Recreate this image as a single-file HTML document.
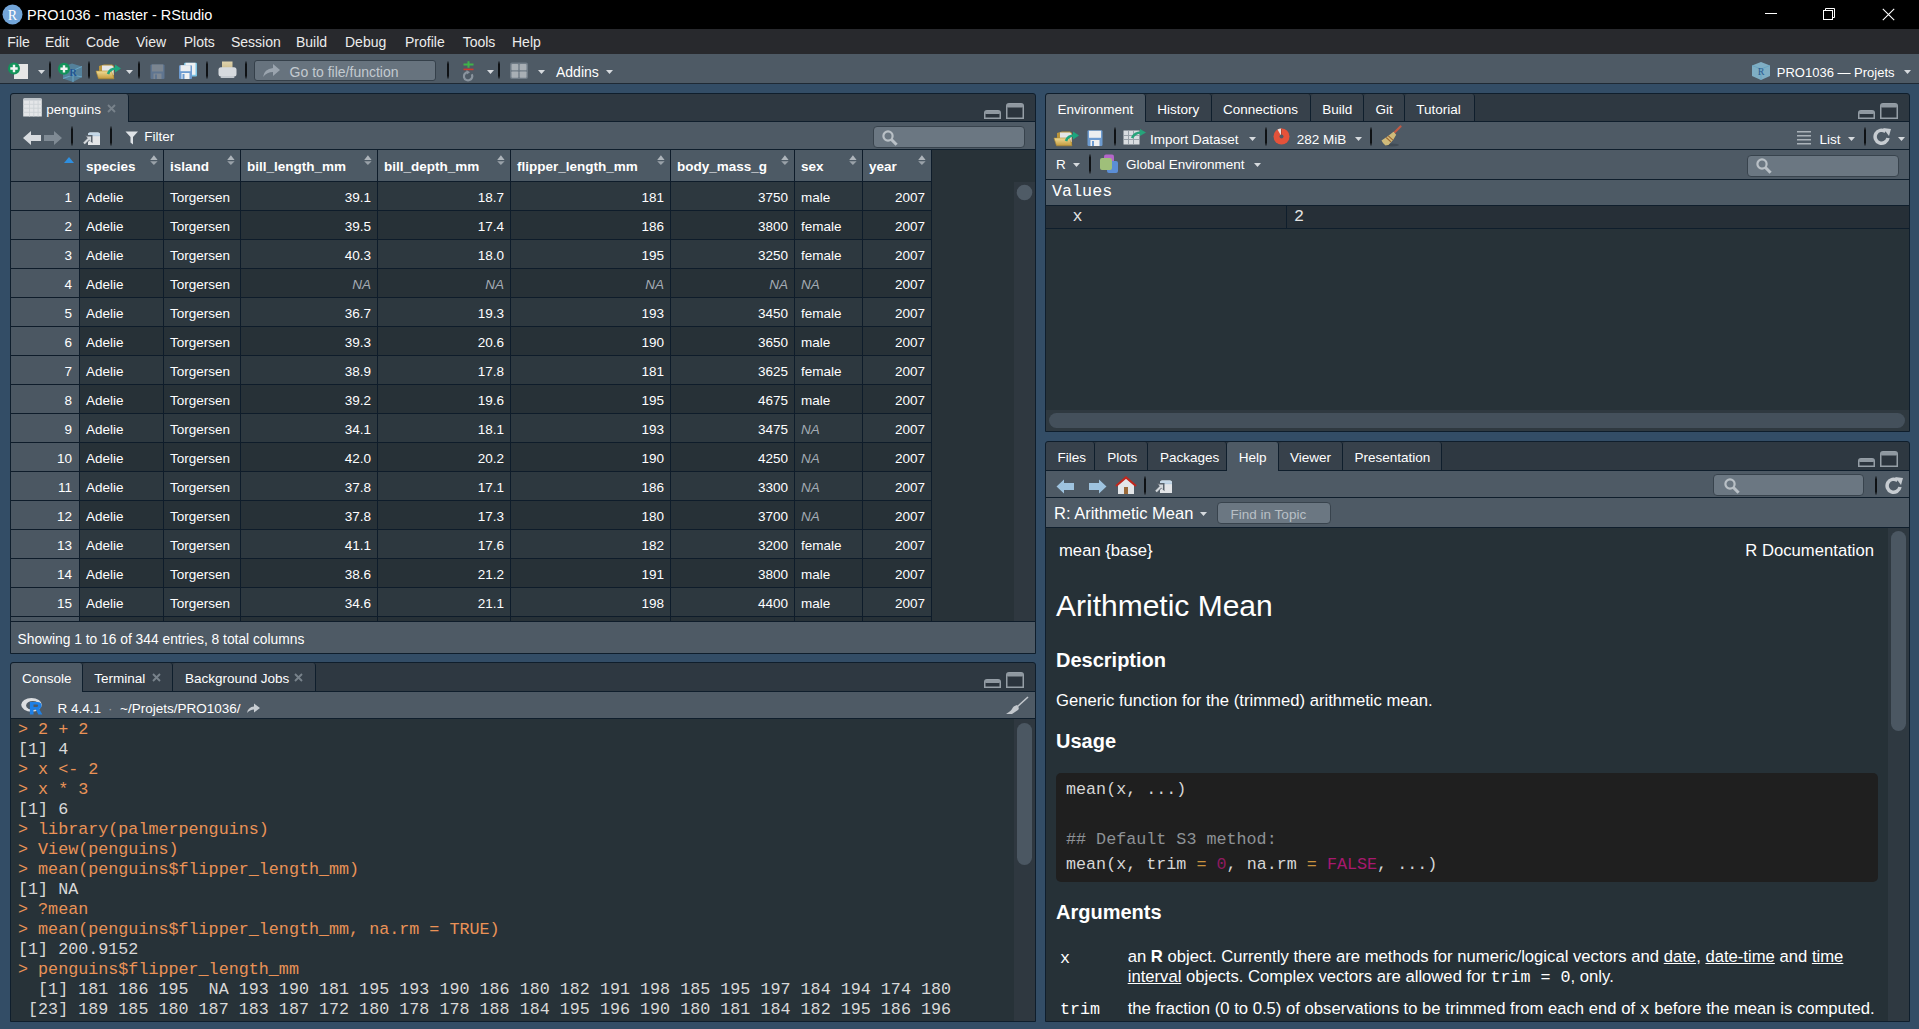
<!DOCTYPE html><html><head><meta charset="utf-8"><style>
html,body{margin:0;padding:0;background:#334d66;}
#root{position:relative;width:1919px;height:1029px;overflow:hidden;background:#334d66;font-family:"Liberation Sans",sans-serif;}
#root div,#root svg{position:absolute;}
</style></head><body><div id="root">
<div style="left:0px;top:0px;width:1919px;height:29px;background:#000000;"></div>
<svg style="left:1.5px;top:3.6px;" width="21" height="21" viewBox="0 0 21 21"><circle cx="10.5" cy="10.5" r="10" fill="#72a5d9"/><text x="10.5" y="15.5" font-family="Liberation Serif" font-size="14" fill="#fff" text-anchor="middle">R</text></svg>
<div style="left:27px;top:6.48px;line-height:19px;font-size:14.5px;color:#ffffff;font-weight:normal;font-family:'Liberation Sans', sans-serif;white-space:pre;">PRO1036 - master - RStudio</div>
<div style="left:1765px;top:13px;width:12px;height:1px;background:#ffffff;"></div>
<svg style="left:1822px;top:7px;" width="15" height="15" viewBox="0 0 15 15"><path d="M3.5 3.5 V1.5 H12.5 V10.5 H10.5" fill="none" stroke="#fff" stroke-width="1"/><rect x="1.5" y="3.5" width="9" height="9" fill="none" stroke="#fff" stroke-width="1"/></svg>
<svg style="left:1881.5px;top:7.5px;" width="13" height="13" viewBox="0 0 13 13"><path d="M0.8 0.8 L12.2 12.2 M12.2 0.8 L0.8 12.2" stroke="#fff" stroke-width="1.1"/></svg>
<div style="left:0px;top:29px;width:1919px;height:25px;background:#28292d;"></div>
<div style="left:7.3px;top:33.15px;line-height:18px;font-size:14px;color:#ececec;font-weight:normal;font-family:'Liberation Sans', sans-serif;white-space:pre;">File</div>
<div style="left:45px;top:33.15px;line-height:18px;font-size:14px;color:#ececec;font-weight:normal;font-family:'Liberation Sans', sans-serif;white-space:pre;">Edit</div>
<div style="left:86px;top:33.15px;line-height:18px;font-size:14px;color:#ececec;font-weight:normal;font-family:'Liberation Sans', sans-serif;white-space:pre;">Code</div>
<div style="left:136px;top:33.15px;line-height:18px;font-size:14px;color:#ececec;font-weight:normal;font-family:'Liberation Sans', sans-serif;white-space:pre;">View</div>
<div style="left:183.7px;top:33.15px;line-height:18px;font-size:14px;color:#ececec;font-weight:normal;font-family:'Liberation Sans', sans-serif;white-space:pre;">Plots</div>
<div style="left:231px;top:33.15px;line-height:18px;font-size:14px;color:#ececec;font-weight:normal;font-family:'Liberation Sans', sans-serif;white-space:pre;">Session</div>
<div style="left:296px;top:33.15px;line-height:18px;font-size:14px;color:#ececec;font-weight:normal;font-family:'Liberation Sans', sans-serif;white-space:pre;">Build</div>
<div style="left:345px;top:33.15px;line-height:18px;font-size:14px;color:#ececec;font-weight:normal;font-family:'Liberation Sans', sans-serif;white-space:pre;">Debug</div>
<div style="left:405px;top:33.15px;line-height:18px;font-size:14px;color:#ececec;font-weight:normal;font-family:'Liberation Sans', sans-serif;white-space:pre;">Profile</div>
<div style="left:462.7px;top:33.15px;line-height:18px;font-size:14px;color:#ececec;font-weight:normal;font-family:'Liberation Sans', sans-serif;white-space:pre;">Tools</div>
<div style="left:512px;top:33.15px;line-height:18px;font-size:14px;color:#ececec;font-weight:normal;font-family:'Liberation Sans', sans-serif;white-space:pre;">Help</div>
<div style="left:0px;top:54px;width:1919px;height:29px;background:#4e5a65;"></div>
<div style="left:0px;top:83px;width:1919px;height:1px;background:#1f2a35;"></div>
<svg style="left:7px;top:62px;" width="23" height="18" viewBox="0 0 23 18"><rect x="7" y="2" width="14" height="15" fill="#e6e6e6"/><circle cx="7" cy="6.5" r="6" fill="#13935a"/><path d="M7 2.8 V10.2 M3.3 6.5 H10.7" stroke="#f4f4f4" stroke-width="2.4"/></svg>
<svg style="left:38px;top:70px;" width="7" height="4" viewBox="0 0 7 4"><path d="M0 0 L7 0 L3.5 4 Z" fill="#d6dade"/></svg>
<div style="left:49px;top:61px;width:2px;height:18px;background:linear-gradient(rgba(14,17,20,0.25),#0e1114 18%,#0e1114 82%,rgba(14,17,20,0.25));border-radius:1px"></div>
<svg style="left:57px;top:62px;" width="26" height="21" viewBox="0 0 26 21"><path d="M15 1.5 L25 4.5 L25 15 L16 20 L6 16.5 L6 5 Z" fill="#5aa2c8" opacity="0.55"/><path d="M6 5 L16 8.5 L25 4.5 M16 8.5 V20 M6 16.5 L16 13 L25 15" stroke="#77bde0" stroke-width="0.8" fill="none" opacity="0.8"/><text x="16" y="14" font-family="Liberation Serif" font-size="10" font-weight="bold" fill="#1f5594" text-anchor="middle">R</text><circle cx="7" cy="6.8" r="6" fill="#13935a"/><path d="M7 3.2 V10.4 M3.4 6.8 H10.6" stroke="#f4f4f4" stroke-width="2.4"/></svg>
<div style="left:88px;top:61px;width:2px;height:18px;background:linear-gradient(rgba(14,17,20,0.25),#0e1114 18%,#0e1114 82%,rgba(14,17,20,0.25));border-radius:1px"></div>
<svg style="left:95px;top:62px;" width="27" height="18" viewBox="0 0 27 18"><defs><linearGradient id="fg" x1="0" y1="0" x2="0" y2="1"><stop offset="0" stop-color="#f0dc98"/><stop offset="1" stop-color="#c39a3c"/></linearGradient></defs><path d="M4 4 L9 2.5 H17 L19 4 V16 H4 Z" fill="#b8943c"/><path d="M7 3.5 H17 L18.5 5 V13 H7 Z" fill="#e4e6e8"/><path d="M1 9 H16.5 L19 16.8 H3.5 Z" fill="url(#fg)" stroke="#b08a30" stroke-width="0.6"/><path d="M13 12 Q15 6.5 21 6.5" stroke="#1ea67e" stroke-width="2.6" fill="none"/><path d="M20 2.5 L26 6.5 L20 10.5 Z" fill="#1ea67e"/></svg>
<svg style="left:126px;top:70px;" width="7" height="4" viewBox="0 0 7 4"><path d="M0 0 L7 0 L3.5 4 Z" fill="#d6dade"/></svg>
<div style="left:138px;top:61px;width:2px;height:18px;background:linear-gradient(rgba(14,17,20,0.25),#0e1114 18%,#0e1114 82%,rgba(14,17,20,0.25));border-radius:1px"></div>
<svg style="left:150px;top:64px;" width="16" height="16" viewBox="0 0 16 16"><rect x="0.5" y="0.5" width="14" height="14.5" rx="1" fill="#5f7590"/><rect x="2" y="0.5" width="11" height="7" fill="#7b8590"/><rect x="3.5" y="9.5" width="8" height="5.5" fill="#7e8893"/><rect x="5" y="10.5" width="2" height="4.5" fill="#5f7590"/></svg>
<svg style="left:178px;top:62px;" width="21" height="18" viewBox="0 0 21 18"><rect x="6" y="0.8" width="13" height="13.8" rx="1" fill="#7cc4e4"/><rect x="7.5" y="0.8" width="10" height="12" fill="#eef1f3"/><rect x="1" y="3.2" width="13" height="13.8" rx="1" fill="#6d9bd0"/><rect x="2.5" y="3.2" width="10" height="6" fill="#eceef0"/><rect x="3.5" y="11" width="8" height="6" fill="#f2f2f2"/><rect x="4.5" y="12" width="2" height="5" fill="#6d9bd0"/></svg>
<div style="left:206px;top:61px;width:2px;height:18px;background:linear-gradient(rgba(14,17,20,0.25),#0e1114 18%,#0e1114 82%,rgba(14,17,20,0.25));border-radius:1px"></div>
<svg style="left:217px;top:61px;" width="21" height="18" viewBox="0 0 21 18"><defs><linearGradient id="pg" x1="0" y1="0" x2="0" y2="1"><stop offset="0" stop-color="#e0d4ae"/><stop offset="1" stop-color="#c8b88a"/></linearGradient></defs><rect x="5" y="0.5" width="10.5" height="8.5" fill="url(#pg)"/><rect x="1.5" y="6.2" width="18" height="9.2" rx="2.5" fill="#d6dade"/><rect x="3.5" y="15" width="14" height="2" rx="1" fill="#c4cad0"/></svg>
<div style="left:245px;top:61px;width:2px;height:18px;background:linear-gradient(rgba(14,17,20,0.25),#0e1114 18%,#0e1114 82%,rgba(14,17,20,0.25));border-radius:1px"></div>
<div style="left:254px;top:60px;width:180px;height:19px;background:#67737e;border:1px solid #35404a;border-radius:3px"></div>
<svg style="left:262px;top:63px;" width="19" height="15" viewBox="0 0 19 15"><path d="M1 14 Q2 6 11 5 V1 L18 7 L11 13 V9 Q5 9 1 14 Z" fill="#9aa4ae"/></svg>
<div style="left:289.6px;top:63.15px;line-height:18px;font-size:14px;color:#c3cad0;font-weight:normal;font-family:'Liberation Sans', sans-serif;white-space:pre;">Go to file/function</div>
<div style="left:447px;top:61px;width:2px;height:18px;background:linear-gradient(rgba(14,17,20,0.25),#0e1114 18%,#0e1114 82%,rgba(14,17,20,0.25));border-radius:1px"></div>
<svg style="left:461px;top:60px;" width="15" height="22" viewBox="0 0 15 22"><path d="M7.5 1.2 V7.8 M2.5 4.5 H12.5" stroke="#3fb34a" stroke-width="2"/><rect x="2.5" y="8.6" width="10" height="1.6" fill="#cf3a30"/><path d="M10.8 14.2 A4.2 4.2 0 1 1 6.6 12" stroke="#8a949e" stroke-width="2.2" fill="none"/><path d="M5.5 10 L9 12.2 L5.8 14.6 Z" fill="#8a949e"/></svg>
<svg style="left:486.6px;top:70px;" width="7" height="4" viewBox="0 0 7 4"><path d="M0 0 L7 0 L3.5 4 Z" fill="#d6dade"/></svg>
<div style="left:498px;top:61px;width:2px;height:18px;background:linear-gradient(rgba(14,17,20,0.25),#0e1114 18%,#0e1114 82%,rgba(14,17,20,0.25));border-radius:1px"></div>
<svg style="left:509px;top:62px;" width="20" height="18" viewBox="0 0 20 18"><rect x="1" y="0.5" width="18" height="16.5" rx="2" fill="#6f7b86"/><rect x="2.5" y="2" width="6.8" height="6.2" rx="0.8" fill="#a8afb5"/><rect x="10.7" y="2" width="6.8" height="6.2" rx="0.8" fill="#a8afb5"/><rect x="2.5" y="9.5" width="6.8" height="6.2" rx="0.8" fill="#a8afb5"/><rect x="10.7" y="9.5" width="6.8" height="6.2" rx="0.8" fill="#a8afb5"/></svg>
<svg style="left:538px;top:70px;" width="7" height="4" viewBox="0 0 7 4"><path d="M0 0 L7 0 L3.5 4 Z" fill="#d6dade"/></svg>
<div style="left:556px;top:63.15px;line-height:18px;font-size:14px;color:#ffffff;font-weight:normal;font-family:'Liberation Sans', sans-serif;white-space:pre;">Addins</div>
<svg style="left:606.4px;top:70px;" width="7" height="4" viewBox="0 0 7 4"><path d="M0 0 L7 0 L3.5 4 Z" fill="#d6dade"/></svg>
<svg style="left:1751px;top:61px;" width="20" height="20" viewBox="0 0 20 20"><path d="M10 1 L19 4.5 L19 15 L10 19 L1 15 L1 4.5 Z" fill="#8cc3dc" opacity="0.8"/><path d="M1 4.5 L10 8 L19 4.5 M10 8 V19" stroke="#5fa0c0" stroke-width="0.7" fill="none"/><text x="10" y="13.5" font-family="Liberation Serif" font-size="10" fill="#2a5c92" text-anchor="middle">R</text></svg>
<div style="left:1776.8px;top:64.00px;line-height:17px;font-size:13px;color:#ffffff;font-weight:normal;font-family:'Liberation Sans', sans-serif;white-space:pre;">PRO1036 — Projets</div>
<svg style="left:1904px;top:70px;" width="7" height="4" viewBox="0 0 7 4"><path d="M0 0 L7 0 L3.5 4 Z" fill="#d6dade"/></svg>
<div style="left:10px;top:93px;width:1024px;height:559px;border:1px solid #0f1e2c;border-radius:3px 3px 0 0;background:#2e3841;overflow:hidden"></div>
<div style="left:11px;top:121px;width:1024px;height:1px;background:#0f1e2c;"></div>
<div style="left:11px;top:94px;width:117px;height:28px;background:#4e5a65;border-right:1px solid #0f1e2c;border-radius:3px 3px 0 0"></div>
<div style="left:46.3px;top:101.32px;line-height:18px;font-size:13.5px;color:#ffffff;font-weight:normal;font-family:'Liberation Sans', sans-serif;white-space:pre;">penguins</div>
<svg style="left:107px;top:103.5px;" width="9" height="9" viewBox="0 0 9 9"><path d="M1 1 L8 8 M8 1 L1 8" stroke="#78828b" stroke-width="1.9"/></svg>
<svg style="left:22.5px;top:97.5px;" width="19" height="19" viewBox="0 0 19 19"><path d="M0.2 18.5 V2 Q0.2 0.2 2 0.2 H17 Q18.8 0.2 18.8 2 V18.5 Z" fill="#e4e6e8"/><rect x="0.2" y="0.2" width="18.6" height="2.3" rx="1.2" fill="#bfc6cc"/><path d="M6.5 2.5 V18.5" stroke="#cdd2d6" stroke-width="0.9"/><path d="M10.8 2.5 V18.5" stroke="#cdd2d6" stroke-width="0.9"/><path d="M15.1 2.5 V18.5" stroke="#cdd2d6" stroke-width="0.9"/><path d="M0.2 6.3 H18.8" stroke="#cdd2d6" stroke-width="0.9"/><path d="M0.2 10.2 H18.8" stroke="#cdd2d6" stroke-width="0.9"/><path d="M0.2 14.3 H18.8" stroke="#cdd2d6" stroke-width="0.9"/></svg>
<svg style="left:984px;top:110px;" width="17" height="9" viewBox="0 0 17 9"><path d="M0.75 8.25 V3 Q0.75 0.75 3 0.75 H14 Q16.25 0.75 16.25 3 V8.25 Z" fill="#2b343d" stroke="#959ea6" stroke-width="1.5"/><rect x="1" y="1" width="15" height="3" rx="1" fill="#8f98a0"/></svg>
<svg style="left:1006px;top:103px;" width="18" height="16" viewBox="0 0 18 16"><path d="M0.75 15.25 V3 Q0.75 0.75 3 0.75 H15 Q17.25 0.75 17.25 3 V15.25 Z" fill="#2b343d" stroke="#959ea6" stroke-width="1.5"/><rect x="1" y="1" width="16" height="3.5" rx="1" fill="#8f98a0"/></svg>
<div style="left:11px;top:122px;width:1024px;height:27px;background:#4e5a65;"></div>
<div style="left:11px;top:149px;width:1024px;height:1px;background:#0f1e2c;"></div>
<svg style="left:22px;top:130px;" width="20" height="16" viewBox="0 0 20 16"><path d="M1 8 L9 1 V5 H19 V11 H9 V15 Z" fill="#d7dbdf"/></svg>
<svg style="left:43px;top:130px;" width="20" height="16" viewBox="0 0 20 16"><path d="M19 8 L11 1 V5 H1 V11 H11 V15 Z" fill="#7f8a94"/></svg>
<div style="left:70.5px;top:126px;width:2px;height:20px;background:linear-gradient(rgba(14,17,20,0.25),#0e1114 18%,#0e1114 82%,rgba(14,17,20,0.25));border-radius:1px"></div>
<svg style="left:81.5px;top:131.5px;" width="20" height="15" viewBox="0 0 20 15"><path d="M6 13 V2.5 Q6 0.5 8 0.5 H16 Q18 0.5 18 2.5 V13 Z" fill="#e3e5e8"/><path d="M6 3.2 V2.5 Q6 0.5 8 0.5 H16 Q18 0.5 18 2.5 V3.2 Z" fill="#c5d8e8"/><rect x="6" y="3" width="12" height="1.2" fill="#b8cde0"/><path d="M4 3.8 H9.8 V9.6 Z" fill="#59636d" stroke="#59636d" stroke-width="1.4"/><path d="M2 11.5 L7 6.5" stroke="#59636d" stroke-width="3.6"/><path d="M2 11.5 L7 6.5" stroke="#d4d8dc" stroke-width="2.2"/><path d="M4.2 4.6 H9 V9.4 Z" fill="#d4d8dc"/></svg>
<div style="left:109.5px;top:126px;width:2px;height:20px;background:linear-gradient(rgba(14,17,20,0.25),#0e1114 18%,#0e1114 82%,rgba(14,17,20,0.25));border-radius:1px"></div>
<svg style="left:125px;top:131px;" width="14" height="14" viewBox="0 0 14 14"><path d="M0.5 0.5 H13 L8 6 V13.5 L5.5 11.5 V6 Z" fill="#dfe3e7"/></svg>
<div style="left:144.3px;top:128.32px;line-height:18px;font-size:13.5px;color:#ffffff;font-weight:normal;font-family:'Liberation Sans', sans-serif;white-space:pre;">Filter</div>
<div style="left:873px;top:126px;width:150px;height:20px;background:#6b7782;border:1px solid #38434d;border-radius:4px"></div>
<svg style="left:881px;top:128.5px;" width="18" height="18" viewBox="0 0 18 18"><circle cx="7" cy="7" r="4.6" fill="none" stroke="#b9c0c6" stroke-width="2.2"/><path d="M10.2 10.2 L15.6 15.8" stroke="#b9c0c6" stroke-width="3"/></svg>
<div style="left:11px;top:150px;width:1024px;height:471px;background:#283238;"></div>
<div style="left:11px;top:150px;width:68px;height:31px;background:#4b5762;"></div>
<div style="left:79px;top:150px;width:1px;height:31px;background:#0e1c2a;"></div>
<div style="left:80px;top:150px;width:83px;height:31px;background:#4d5a65;"></div>
<div style="left:163px;top:150px;width:1px;height:31px;background:#0e1c2a;"></div>
<div style="left:86px;top:158.32px;line-height:18px;font-size:13.5px;color:#ffffff;font-weight:bold;font-family:'Liberation Sans', sans-serif;white-space:pre;">species</div>
<svg style="left:149.5px;top:155px;" width="8" height="10" viewBox="0 0 8 10"><path d="M0.2 5 L3.9 0.2 L7.6 5 Z" fill="#aeb5bb"/><path d="M0.2 6.2 L3.9 10 L7.6 6.2 Z" fill="#9aa2a9"/></svg>
<div style="left:164px;top:150px;width:76px;height:31px;background:#4d5a65;"></div>
<div style="left:240px;top:150px;width:1px;height:31px;background:#0e1c2a;"></div>
<div style="left:170px;top:158.32px;line-height:18px;font-size:13.5px;color:#ffffff;font-weight:bold;font-family:'Liberation Sans', sans-serif;white-space:pre;">island</div>
<svg style="left:226.5px;top:155px;" width="8" height="10" viewBox="0 0 8 10"><path d="M0.2 5 L3.9 0.2 L7.6 5 Z" fill="#aeb5bb"/><path d="M0.2 6.2 L3.9 10 L7.6 6.2 Z" fill="#9aa2a9"/></svg>
<div style="left:241px;top:150px;width:136px;height:31px;background:#4d5a65;"></div>
<div style="left:377px;top:150px;width:1px;height:31px;background:#0e1c2a;"></div>
<div style="left:247px;top:158.32px;line-height:18px;font-size:13.5px;color:#ffffff;font-weight:bold;font-family:'Liberation Sans', sans-serif;white-space:pre;">bill_length_mm</div>
<svg style="left:363.5px;top:155px;" width="8" height="10" viewBox="0 0 8 10"><path d="M0.2 5 L3.9 0.2 L7.6 5 Z" fill="#aeb5bb"/><path d="M0.2 6.2 L3.9 10 L7.6 6.2 Z" fill="#9aa2a9"/></svg>
<div style="left:378px;top:150px;width:132px;height:31px;background:#4d5a65;"></div>
<div style="left:510px;top:150px;width:1px;height:31px;background:#0e1c2a;"></div>
<div style="left:384px;top:158.32px;line-height:18px;font-size:13.5px;color:#ffffff;font-weight:bold;font-family:'Liberation Sans', sans-serif;white-space:pre;">bill_depth_mm</div>
<svg style="left:496.5px;top:155px;" width="8" height="10" viewBox="0 0 8 10"><path d="M0.2 5 L3.9 0.2 L7.6 5 Z" fill="#aeb5bb"/><path d="M0.2 6.2 L3.9 10 L7.6 6.2 Z" fill="#9aa2a9"/></svg>
<div style="left:511px;top:150px;width:159px;height:31px;background:#4d5a65;"></div>
<div style="left:670px;top:150px;width:1px;height:31px;background:#0e1c2a;"></div>
<div style="left:517px;top:158.32px;line-height:18px;font-size:13.5px;color:#ffffff;font-weight:bold;font-family:'Liberation Sans', sans-serif;white-space:pre;">flipper_length_mm</div>
<svg style="left:656.5px;top:155px;" width="8" height="10" viewBox="0 0 8 10"><path d="M0.2 5 L3.9 0.2 L7.6 5 Z" fill="#aeb5bb"/><path d="M0.2 6.2 L3.9 10 L7.6 6.2 Z" fill="#9aa2a9"/></svg>
<div style="left:671px;top:150px;width:123px;height:31px;background:#4d5a65;"></div>
<div style="left:794px;top:150px;width:1px;height:31px;background:#0e1c2a;"></div>
<div style="left:677px;top:158.32px;line-height:18px;font-size:13.5px;color:#ffffff;font-weight:bold;font-family:'Liberation Sans', sans-serif;white-space:pre;">body_mass_g</div>
<svg style="left:780.5px;top:155px;" width="8" height="10" viewBox="0 0 8 10"><path d="M0.2 5 L3.9 0.2 L7.6 5 Z" fill="#aeb5bb"/><path d="M0.2 6.2 L3.9 10 L7.6 6.2 Z" fill="#9aa2a9"/></svg>
<div style="left:795px;top:150px;width:67px;height:31px;background:#4d5a65;"></div>
<div style="left:862px;top:150px;width:1px;height:31px;background:#0e1c2a;"></div>
<div style="left:801px;top:158.32px;line-height:18px;font-size:13.5px;color:#ffffff;font-weight:bold;font-family:'Liberation Sans', sans-serif;white-space:pre;">sex</div>
<svg style="left:848.5px;top:155px;" width="8" height="10" viewBox="0 0 8 10"><path d="M0.2 5 L3.9 0.2 L7.6 5 Z" fill="#aeb5bb"/><path d="M0.2 6.2 L3.9 10 L7.6 6.2 Z" fill="#9aa2a9"/></svg>
<div style="left:863px;top:150px;width:68px;height:31px;background:#4d5a65;"></div>
<div style="left:931px;top:150px;width:1px;height:31px;background:#0e1c2a;"></div>
<div style="left:869px;top:158.32px;line-height:18px;font-size:13.5px;color:#ffffff;font-weight:bold;font-family:'Liberation Sans', sans-serif;white-space:pre;">year</div>
<svg style="left:917.5px;top:155px;" width="8" height="10" viewBox="0 0 8 10"><path d="M0.2 5 L3.9 0.2 L7.6 5 Z" fill="#aeb5bb"/><path d="M0.2 6.2 L3.9 10 L7.6 6.2 Z" fill="#9aa2a9"/></svg>
<svg style="left:64px;top:157px;" width="10" height="6" viewBox="0 0 10 6"><path d="M0 6 L5 0 L10 6 Z" fill="#2e8fe0"/></svg>
<div style="left:11px;top:181px;width:921px;height:1px;background:#0e1c2a;"></div>
<div style="left:11px;top:182px;width:68px;height:28px;background:#4b5762;"></div>
<div style="left:80px;top:182px;width:852px;height:28px;background:#2d383f;"></div>
<div style="left:79px;top:182px;width:1px;height:28px;background:#0e1c2a;"></div>
<div style="left:163px;top:182px;width:1px;height:28px;background:#0e1c2a;"></div>
<div style="left:240px;top:182px;width:1px;height:28px;background:#0e1c2a;"></div>
<div style="left:377px;top:182px;width:1px;height:28px;background:#0e1c2a;"></div>
<div style="left:510px;top:182px;width:1px;height:28px;background:#0e1c2a;"></div>
<div style="left:670px;top:182px;width:1px;height:28px;background:#0e1c2a;"></div>
<div style="left:794px;top:182px;width:1px;height:28px;background:#0e1c2a;"></div>
<div style="left:862px;top:182px;width:1px;height:28px;background:#0e1c2a;"></div>
<div style="left:931px;top:182px;width:1px;height:28px;background:#0e1c2a;"></div>
<div style="left:11px;top:210px;width:921px;height:1px;background:#0e1c2a;"></div>
<div style="right:1847px;top:189.32px;line-height:18px;font-size:13.5px;color:#ffffff;font-weight:normal;font-family:'Liberation Sans', sans-serif;white-space:pre;">1</div>
<div style="left:86px;top:189.32px;line-height:18px;font-size:13.5px;color:#ffffff;font-weight:normal;font-family:'Liberation Sans', sans-serif;white-space:pre;">Adelie</div>
<div style="left:170px;top:189.32px;line-height:18px;font-size:13.5px;color:#ffffff;font-weight:normal;font-family:'Liberation Sans', sans-serif;white-space:pre;">Torgersen</div>
<div style="right:1548px;top:189.32px;line-height:18px;font-size:13.5px;color:#ffffff;font-weight:normal;font-family:'Liberation Sans', sans-serif;white-space:pre;">39.1</div>
<div style="right:1415px;top:189.32px;line-height:18px;font-size:13.5px;color:#ffffff;font-weight:normal;font-family:'Liberation Sans', sans-serif;white-space:pre;">18.7</div>
<div style="right:1255px;top:189.32px;line-height:18px;font-size:13.5px;color:#ffffff;font-weight:normal;font-family:'Liberation Sans', sans-serif;white-space:pre;">181</div>
<div style="right:1131px;top:189.32px;line-height:18px;font-size:13.5px;color:#ffffff;font-weight:normal;font-family:'Liberation Sans', sans-serif;white-space:pre;">3750</div>
<div style="left:801px;top:189.32px;line-height:18px;font-size:13.5px;color:#ffffff;font-weight:normal;font-family:'Liberation Sans', sans-serif;white-space:pre;">male</div>
<div style="right:994px;top:189.32px;line-height:18px;font-size:13.5px;color:#ffffff;font-weight:normal;font-family:'Liberation Sans', sans-serif;white-space:pre;">2007</div>
<div style="left:11px;top:211px;width:68px;height:28px;background:#4b5762;"></div>
<div style="left:80px;top:211px;width:852px;height:28px;background:#273137;"></div>
<div style="left:79px;top:211px;width:1px;height:28px;background:#0e1c2a;"></div>
<div style="left:163px;top:211px;width:1px;height:28px;background:#0e1c2a;"></div>
<div style="left:240px;top:211px;width:1px;height:28px;background:#0e1c2a;"></div>
<div style="left:377px;top:211px;width:1px;height:28px;background:#0e1c2a;"></div>
<div style="left:510px;top:211px;width:1px;height:28px;background:#0e1c2a;"></div>
<div style="left:670px;top:211px;width:1px;height:28px;background:#0e1c2a;"></div>
<div style="left:794px;top:211px;width:1px;height:28px;background:#0e1c2a;"></div>
<div style="left:862px;top:211px;width:1px;height:28px;background:#0e1c2a;"></div>
<div style="left:931px;top:211px;width:1px;height:28px;background:#0e1c2a;"></div>
<div style="left:11px;top:239px;width:921px;height:1px;background:#0e1c2a;"></div>
<div style="right:1847px;top:218.32px;line-height:18px;font-size:13.5px;color:#ffffff;font-weight:normal;font-family:'Liberation Sans', sans-serif;white-space:pre;">2</div>
<div style="left:86px;top:218.32px;line-height:18px;font-size:13.5px;color:#ffffff;font-weight:normal;font-family:'Liberation Sans', sans-serif;white-space:pre;">Adelie</div>
<div style="left:170px;top:218.32px;line-height:18px;font-size:13.5px;color:#ffffff;font-weight:normal;font-family:'Liberation Sans', sans-serif;white-space:pre;">Torgersen</div>
<div style="right:1548px;top:218.32px;line-height:18px;font-size:13.5px;color:#ffffff;font-weight:normal;font-family:'Liberation Sans', sans-serif;white-space:pre;">39.5</div>
<div style="right:1415px;top:218.32px;line-height:18px;font-size:13.5px;color:#ffffff;font-weight:normal;font-family:'Liberation Sans', sans-serif;white-space:pre;">17.4</div>
<div style="right:1255px;top:218.32px;line-height:18px;font-size:13.5px;color:#ffffff;font-weight:normal;font-family:'Liberation Sans', sans-serif;white-space:pre;">186</div>
<div style="right:1131px;top:218.32px;line-height:18px;font-size:13.5px;color:#ffffff;font-weight:normal;font-family:'Liberation Sans', sans-serif;white-space:pre;">3800</div>
<div style="left:801px;top:218.32px;line-height:18px;font-size:13.5px;color:#ffffff;font-weight:normal;font-family:'Liberation Sans', sans-serif;white-space:pre;">female</div>
<div style="right:994px;top:218.32px;line-height:18px;font-size:13.5px;color:#ffffff;font-weight:normal;font-family:'Liberation Sans', sans-serif;white-space:pre;">2007</div>
<div style="left:11px;top:240px;width:68px;height:28px;background:#4b5762;"></div>
<div style="left:80px;top:240px;width:852px;height:28px;background:#2d383f;"></div>
<div style="left:79px;top:240px;width:1px;height:28px;background:#0e1c2a;"></div>
<div style="left:163px;top:240px;width:1px;height:28px;background:#0e1c2a;"></div>
<div style="left:240px;top:240px;width:1px;height:28px;background:#0e1c2a;"></div>
<div style="left:377px;top:240px;width:1px;height:28px;background:#0e1c2a;"></div>
<div style="left:510px;top:240px;width:1px;height:28px;background:#0e1c2a;"></div>
<div style="left:670px;top:240px;width:1px;height:28px;background:#0e1c2a;"></div>
<div style="left:794px;top:240px;width:1px;height:28px;background:#0e1c2a;"></div>
<div style="left:862px;top:240px;width:1px;height:28px;background:#0e1c2a;"></div>
<div style="left:931px;top:240px;width:1px;height:28px;background:#0e1c2a;"></div>
<div style="left:11px;top:268px;width:921px;height:1px;background:#0e1c2a;"></div>
<div style="right:1847px;top:247.32px;line-height:18px;font-size:13.5px;color:#ffffff;font-weight:normal;font-family:'Liberation Sans', sans-serif;white-space:pre;">3</div>
<div style="left:86px;top:247.32px;line-height:18px;font-size:13.5px;color:#ffffff;font-weight:normal;font-family:'Liberation Sans', sans-serif;white-space:pre;">Adelie</div>
<div style="left:170px;top:247.32px;line-height:18px;font-size:13.5px;color:#ffffff;font-weight:normal;font-family:'Liberation Sans', sans-serif;white-space:pre;">Torgersen</div>
<div style="right:1548px;top:247.32px;line-height:18px;font-size:13.5px;color:#ffffff;font-weight:normal;font-family:'Liberation Sans', sans-serif;white-space:pre;">40.3</div>
<div style="right:1415px;top:247.32px;line-height:18px;font-size:13.5px;color:#ffffff;font-weight:normal;font-family:'Liberation Sans', sans-serif;white-space:pre;">18.0</div>
<div style="right:1255px;top:247.32px;line-height:18px;font-size:13.5px;color:#ffffff;font-weight:normal;font-family:'Liberation Sans', sans-serif;white-space:pre;">195</div>
<div style="right:1131px;top:247.32px;line-height:18px;font-size:13.5px;color:#ffffff;font-weight:normal;font-family:'Liberation Sans', sans-serif;white-space:pre;">3250</div>
<div style="left:801px;top:247.32px;line-height:18px;font-size:13.5px;color:#ffffff;font-weight:normal;font-family:'Liberation Sans', sans-serif;white-space:pre;">female</div>
<div style="right:994px;top:247.32px;line-height:18px;font-size:13.5px;color:#ffffff;font-weight:normal;font-family:'Liberation Sans', sans-serif;white-space:pre;">2007</div>
<div style="left:11px;top:269px;width:68px;height:28px;background:#4b5762;"></div>
<div style="left:80px;top:269px;width:852px;height:28px;background:#273137;"></div>
<div style="left:79px;top:269px;width:1px;height:28px;background:#0e1c2a;"></div>
<div style="left:163px;top:269px;width:1px;height:28px;background:#0e1c2a;"></div>
<div style="left:240px;top:269px;width:1px;height:28px;background:#0e1c2a;"></div>
<div style="left:377px;top:269px;width:1px;height:28px;background:#0e1c2a;"></div>
<div style="left:510px;top:269px;width:1px;height:28px;background:#0e1c2a;"></div>
<div style="left:670px;top:269px;width:1px;height:28px;background:#0e1c2a;"></div>
<div style="left:794px;top:269px;width:1px;height:28px;background:#0e1c2a;"></div>
<div style="left:862px;top:269px;width:1px;height:28px;background:#0e1c2a;"></div>
<div style="left:931px;top:269px;width:1px;height:28px;background:#0e1c2a;"></div>
<div style="left:11px;top:297px;width:921px;height:1px;background:#0e1c2a;"></div>
<div style="right:1847px;top:276.32px;line-height:18px;font-size:13.5px;color:#ffffff;font-weight:normal;font-family:'Liberation Sans', sans-serif;white-space:pre;">4</div>
<div style="left:86px;top:276.32px;line-height:18px;font-size:13.5px;color:#ffffff;font-weight:normal;font-family:'Liberation Sans', sans-serif;white-space:pre;">Adelie</div>
<div style="left:170px;top:276.32px;line-height:18px;font-size:13.5px;color:#ffffff;font-weight:normal;font-family:'Liberation Sans', sans-serif;white-space:pre;">Torgersen</div>
<div style="right:1548px;top:276.32px;line-height:18px;font-size:13.5px;color:#a3abb3;font-weight:normal;font-family:'Liberation Sans', sans-serif;white-space:pre;font-style:italic">NA</div>
<div style="right:1415px;top:276.32px;line-height:18px;font-size:13.5px;color:#a3abb3;font-weight:normal;font-family:'Liberation Sans', sans-serif;white-space:pre;font-style:italic">NA</div>
<div style="right:1255px;top:276.32px;line-height:18px;font-size:13.5px;color:#a3abb3;font-weight:normal;font-family:'Liberation Sans', sans-serif;white-space:pre;font-style:italic">NA</div>
<div style="right:1131px;top:276.32px;line-height:18px;font-size:13.5px;color:#a3abb3;font-weight:normal;font-family:'Liberation Sans', sans-serif;white-space:pre;font-style:italic">NA</div>
<div style="left:801px;top:276.32px;line-height:18px;font-size:13.5px;color:#a3abb3;font-weight:normal;font-family:'Liberation Sans', sans-serif;white-space:pre;font-style:italic">NA</div>
<div style="right:994px;top:276.32px;line-height:18px;font-size:13.5px;color:#ffffff;font-weight:normal;font-family:'Liberation Sans', sans-serif;white-space:pre;">2007</div>
<div style="left:11px;top:298px;width:68px;height:28px;background:#4b5762;"></div>
<div style="left:80px;top:298px;width:852px;height:28px;background:#2d383f;"></div>
<div style="left:79px;top:298px;width:1px;height:28px;background:#0e1c2a;"></div>
<div style="left:163px;top:298px;width:1px;height:28px;background:#0e1c2a;"></div>
<div style="left:240px;top:298px;width:1px;height:28px;background:#0e1c2a;"></div>
<div style="left:377px;top:298px;width:1px;height:28px;background:#0e1c2a;"></div>
<div style="left:510px;top:298px;width:1px;height:28px;background:#0e1c2a;"></div>
<div style="left:670px;top:298px;width:1px;height:28px;background:#0e1c2a;"></div>
<div style="left:794px;top:298px;width:1px;height:28px;background:#0e1c2a;"></div>
<div style="left:862px;top:298px;width:1px;height:28px;background:#0e1c2a;"></div>
<div style="left:931px;top:298px;width:1px;height:28px;background:#0e1c2a;"></div>
<div style="left:11px;top:326px;width:921px;height:1px;background:#0e1c2a;"></div>
<div style="right:1847px;top:305.32px;line-height:18px;font-size:13.5px;color:#ffffff;font-weight:normal;font-family:'Liberation Sans', sans-serif;white-space:pre;">5</div>
<div style="left:86px;top:305.32px;line-height:18px;font-size:13.5px;color:#ffffff;font-weight:normal;font-family:'Liberation Sans', sans-serif;white-space:pre;">Adelie</div>
<div style="left:170px;top:305.32px;line-height:18px;font-size:13.5px;color:#ffffff;font-weight:normal;font-family:'Liberation Sans', sans-serif;white-space:pre;">Torgersen</div>
<div style="right:1548px;top:305.32px;line-height:18px;font-size:13.5px;color:#ffffff;font-weight:normal;font-family:'Liberation Sans', sans-serif;white-space:pre;">36.7</div>
<div style="right:1415px;top:305.32px;line-height:18px;font-size:13.5px;color:#ffffff;font-weight:normal;font-family:'Liberation Sans', sans-serif;white-space:pre;">19.3</div>
<div style="right:1255px;top:305.32px;line-height:18px;font-size:13.5px;color:#ffffff;font-weight:normal;font-family:'Liberation Sans', sans-serif;white-space:pre;">193</div>
<div style="right:1131px;top:305.32px;line-height:18px;font-size:13.5px;color:#ffffff;font-weight:normal;font-family:'Liberation Sans', sans-serif;white-space:pre;">3450</div>
<div style="left:801px;top:305.32px;line-height:18px;font-size:13.5px;color:#ffffff;font-weight:normal;font-family:'Liberation Sans', sans-serif;white-space:pre;">female</div>
<div style="right:994px;top:305.32px;line-height:18px;font-size:13.5px;color:#ffffff;font-weight:normal;font-family:'Liberation Sans', sans-serif;white-space:pre;">2007</div>
<div style="left:11px;top:327px;width:68px;height:28px;background:#4b5762;"></div>
<div style="left:80px;top:327px;width:852px;height:28px;background:#273137;"></div>
<div style="left:79px;top:327px;width:1px;height:28px;background:#0e1c2a;"></div>
<div style="left:163px;top:327px;width:1px;height:28px;background:#0e1c2a;"></div>
<div style="left:240px;top:327px;width:1px;height:28px;background:#0e1c2a;"></div>
<div style="left:377px;top:327px;width:1px;height:28px;background:#0e1c2a;"></div>
<div style="left:510px;top:327px;width:1px;height:28px;background:#0e1c2a;"></div>
<div style="left:670px;top:327px;width:1px;height:28px;background:#0e1c2a;"></div>
<div style="left:794px;top:327px;width:1px;height:28px;background:#0e1c2a;"></div>
<div style="left:862px;top:327px;width:1px;height:28px;background:#0e1c2a;"></div>
<div style="left:931px;top:327px;width:1px;height:28px;background:#0e1c2a;"></div>
<div style="left:11px;top:355px;width:921px;height:1px;background:#0e1c2a;"></div>
<div style="right:1847px;top:334.32px;line-height:18px;font-size:13.5px;color:#ffffff;font-weight:normal;font-family:'Liberation Sans', sans-serif;white-space:pre;">6</div>
<div style="left:86px;top:334.32px;line-height:18px;font-size:13.5px;color:#ffffff;font-weight:normal;font-family:'Liberation Sans', sans-serif;white-space:pre;">Adelie</div>
<div style="left:170px;top:334.32px;line-height:18px;font-size:13.5px;color:#ffffff;font-weight:normal;font-family:'Liberation Sans', sans-serif;white-space:pre;">Torgersen</div>
<div style="right:1548px;top:334.32px;line-height:18px;font-size:13.5px;color:#ffffff;font-weight:normal;font-family:'Liberation Sans', sans-serif;white-space:pre;">39.3</div>
<div style="right:1415px;top:334.32px;line-height:18px;font-size:13.5px;color:#ffffff;font-weight:normal;font-family:'Liberation Sans', sans-serif;white-space:pre;">20.6</div>
<div style="right:1255px;top:334.32px;line-height:18px;font-size:13.5px;color:#ffffff;font-weight:normal;font-family:'Liberation Sans', sans-serif;white-space:pre;">190</div>
<div style="right:1131px;top:334.32px;line-height:18px;font-size:13.5px;color:#ffffff;font-weight:normal;font-family:'Liberation Sans', sans-serif;white-space:pre;">3650</div>
<div style="left:801px;top:334.32px;line-height:18px;font-size:13.5px;color:#ffffff;font-weight:normal;font-family:'Liberation Sans', sans-serif;white-space:pre;">male</div>
<div style="right:994px;top:334.32px;line-height:18px;font-size:13.5px;color:#ffffff;font-weight:normal;font-family:'Liberation Sans', sans-serif;white-space:pre;">2007</div>
<div style="left:11px;top:356px;width:68px;height:28px;background:#4b5762;"></div>
<div style="left:80px;top:356px;width:852px;height:28px;background:#2d383f;"></div>
<div style="left:79px;top:356px;width:1px;height:28px;background:#0e1c2a;"></div>
<div style="left:163px;top:356px;width:1px;height:28px;background:#0e1c2a;"></div>
<div style="left:240px;top:356px;width:1px;height:28px;background:#0e1c2a;"></div>
<div style="left:377px;top:356px;width:1px;height:28px;background:#0e1c2a;"></div>
<div style="left:510px;top:356px;width:1px;height:28px;background:#0e1c2a;"></div>
<div style="left:670px;top:356px;width:1px;height:28px;background:#0e1c2a;"></div>
<div style="left:794px;top:356px;width:1px;height:28px;background:#0e1c2a;"></div>
<div style="left:862px;top:356px;width:1px;height:28px;background:#0e1c2a;"></div>
<div style="left:931px;top:356px;width:1px;height:28px;background:#0e1c2a;"></div>
<div style="left:11px;top:384px;width:921px;height:1px;background:#0e1c2a;"></div>
<div style="right:1847px;top:363.32px;line-height:18px;font-size:13.5px;color:#ffffff;font-weight:normal;font-family:'Liberation Sans', sans-serif;white-space:pre;">7</div>
<div style="left:86px;top:363.32px;line-height:18px;font-size:13.5px;color:#ffffff;font-weight:normal;font-family:'Liberation Sans', sans-serif;white-space:pre;">Adelie</div>
<div style="left:170px;top:363.32px;line-height:18px;font-size:13.5px;color:#ffffff;font-weight:normal;font-family:'Liberation Sans', sans-serif;white-space:pre;">Torgersen</div>
<div style="right:1548px;top:363.32px;line-height:18px;font-size:13.5px;color:#ffffff;font-weight:normal;font-family:'Liberation Sans', sans-serif;white-space:pre;">38.9</div>
<div style="right:1415px;top:363.32px;line-height:18px;font-size:13.5px;color:#ffffff;font-weight:normal;font-family:'Liberation Sans', sans-serif;white-space:pre;">17.8</div>
<div style="right:1255px;top:363.32px;line-height:18px;font-size:13.5px;color:#ffffff;font-weight:normal;font-family:'Liberation Sans', sans-serif;white-space:pre;">181</div>
<div style="right:1131px;top:363.32px;line-height:18px;font-size:13.5px;color:#ffffff;font-weight:normal;font-family:'Liberation Sans', sans-serif;white-space:pre;">3625</div>
<div style="left:801px;top:363.32px;line-height:18px;font-size:13.5px;color:#ffffff;font-weight:normal;font-family:'Liberation Sans', sans-serif;white-space:pre;">female</div>
<div style="right:994px;top:363.32px;line-height:18px;font-size:13.5px;color:#ffffff;font-weight:normal;font-family:'Liberation Sans', sans-serif;white-space:pre;">2007</div>
<div style="left:11px;top:385px;width:68px;height:28px;background:#4b5762;"></div>
<div style="left:80px;top:385px;width:852px;height:28px;background:#273137;"></div>
<div style="left:79px;top:385px;width:1px;height:28px;background:#0e1c2a;"></div>
<div style="left:163px;top:385px;width:1px;height:28px;background:#0e1c2a;"></div>
<div style="left:240px;top:385px;width:1px;height:28px;background:#0e1c2a;"></div>
<div style="left:377px;top:385px;width:1px;height:28px;background:#0e1c2a;"></div>
<div style="left:510px;top:385px;width:1px;height:28px;background:#0e1c2a;"></div>
<div style="left:670px;top:385px;width:1px;height:28px;background:#0e1c2a;"></div>
<div style="left:794px;top:385px;width:1px;height:28px;background:#0e1c2a;"></div>
<div style="left:862px;top:385px;width:1px;height:28px;background:#0e1c2a;"></div>
<div style="left:931px;top:385px;width:1px;height:28px;background:#0e1c2a;"></div>
<div style="left:11px;top:413px;width:921px;height:1px;background:#0e1c2a;"></div>
<div style="right:1847px;top:392.32px;line-height:18px;font-size:13.5px;color:#ffffff;font-weight:normal;font-family:'Liberation Sans', sans-serif;white-space:pre;">8</div>
<div style="left:86px;top:392.32px;line-height:18px;font-size:13.5px;color:#ffffff;font-weight:normal;font-family:'Liberation Sans', sans-serif;white-space:pre;">Adelie</div>
<div style="left:170px;top:392.32px;line-height:18px;font-size:13.5px;color:#ffffff;font-weight:normal;font-family:'Liberation Sans', sans-serif;white-space:pre;">Torgersen</div>
<div style="right:1548px;top:392.32px;line-height:18px;font-size:13.5px;color:#ffffff;font-weight:normal;font-family:'Liberation Sans', sans-serif;white-space:pre;">39.2</div>
<div style="right:1415px;top:392.32px;line-height:18px;font-size:13.5px;color:#ffffff;font-weight:normal;font-family:'Liberation Sans', sans-serif;white-space:pre;">19.6</div>
<div style="right:1255px;top:392.32px;line-height:18px;font-size:13.5px;color:#ffffff;font-weight:normal;font-family:'Liberation Sans', sans-serif;white-space:pre;">195</div>
<div style="right:1131px;top:392.32px;line-height:18px;font-size:13.5px;color:#ffffff;font-weight:normal;font-family:'Liberation Sans', sans-serif;white-space:pre;">4675</div>
<div style="left:801px;top:392.32px;line-height:18px;font-size:13.5px;color:#ffffff;font-weight:normal;font-family:'Liberation Sans', sans-serif;white-space:pre;">male</div>
<div style="right:994px;top:392.32px;line-height:18px;font-size:13.5px;color:#ffffff;font-weight:normal;font-family:'Liberation Sans', sans-serif;white-space:pre;">2007</div>
<div style="left:11px;top:414px;width:68px;height:28px;background:#4b5762;"></div>
<div style="left:80px;top:414px;width:852px;height:28px;background:#2d383f;"></div>
<div style="left:79px;top:414px;width:1px;height:28px;background:#0e1c2a;"></div>
<div style="left:163px;top:414px;width:1px;height:28px;background:#0e1c2a;"></div>
<div style="left:240px;top:414px;width:1px;height:28px;background:#0e1c2a;"></div>
<div style="left:377px;top:414px;width:1px;height:28px;background:#0e1c2a;"></div>
<div style="left:510px;top:414px;width:1px;height:28px;background:#0e1c2a;"></div>
<div style="left:670px;top:414px;width:1px;height:28px;background:#0e1c2a;"></div>
<div style="left:794px;top:414px;width:1px;height:28px;background:#0e1c2a;"></div>
<div style="left:862px;top:414px;width:1px;height:28px;background:#0e1c2a;"></div>
<div style="left:931px;top:414px;width:1px;height:28px;background:#0e1c2a;"></div>
<div style="left:11px;top:442px;width:921px;height:1px;background:#0e1c2a;"></div>
<div style="right:1847px;top:421.32px;line-height:18px;font-size:13.5px;color:#ffffff;font-weight:normal;font-family:'Liberation Sans', sans-serif;white-space:pre;">9</div>
<div style="left:86px;top:421.32px;line-height:18px;font-size:13.5px;color:#ffffff;font-weight:normal;font-family:'Liberation Sans', sans-serif;white-space:pre;">Adelie</div>
<div style="left:170px;top:421.32px;line-height:18px;font-size:13.5px;color:#ffffff;font-weight:normal;font-family:'Liberation Sans', sans-serif;white-space:pre;">Torgersen</div>
<div style="right:1548px;top:421.32px;line-height:18px;font-size:13.5px;color:#ffffff;font-weight:normal;font-family:'Liberation Sans', sans-serif;white-space:pre;">34.1</div>
<div style="right:1415px;top:421.32px;line-height:18px;font-size:13.5px;color:#ffffff;font-weight:normal;font-family:'Liberation Sans', sans-serif;white-space:pre;">18.1</div>
<div style="right:1255px;top:421.32px;line-height:18px;font-size:13.5px;color:#ffffff;font-weight:normal;font-family:'Liberation Sans', sans-serif;white-space:pre;">193</div>
<div style="right:1131px;top:421.32px;line-height:18px;font-size:13.5px;color:#ffffff;font-weight:normal;font-family:'Liberation Sans', sans-serif;white-space:pre;">3475</div>
<div style="left:801px;top:421.32px;line-height:18px;font-size:13.5px;color:#a3abb3;font-weight:normal;font-family:'Liberation Sans', sans-serif;white-space:pre;font-style:italic">NA</div>
<div style="right:994px;top:421.32px;line-height:18px;font-size:13.5px;color:#ffffff;font-weight:normal;font-family:'Liberation Sans', sans-serif;white-space:pre;">2007</div>
<div style="left:11px;top:443px;width:68px;height:28px;background:#4b5762;"></div>
<div style="left:80px;top:443px;width:852px;height:28px;background:#273137;"></div>
<div style="left:79px;top:443px;width:1px;height:28px;background:#0e1c2a;"></div>
<div style="left:163px;top:443px;width:1px;height:28px;background:#0e1c2a;"></div>
<div style="left:240px;top:443px;width:1px;height:28px;background:#0e1c2a;"></div>
<div style="left:377px;top:443px;width:1px;height:28px;background:#0e1c2a;"></div>
<div style="left:510px;top:443px;width:1px;height:28px;background:#0e1c2a;"></div>
<div style="left:670px;top:443px;width:1px;height:28px;background:#0e1c2a;"></div>
<div style="left:794px;top:443px;width:1px;height:28px;background:#0e1c2a;"></div>
<div style="left:862px;top:443px;width:1px;height:28px;background:#0e1c2a;"></div>
<div style="left:931px;top:443px;width:1px;height:28px;background:#0e1c2a;"></div>
<div style="left:11px;top:471px;width:921px;height:1px;background:#0e1c2a;"></div>
<div style="right:1847px;top:450.32px;line-height:18px;font-size:13.5px;color:#ffffff;font-weight:normal;font-family:'Liberation Sans', sans-serif;white-space:pre;">10</div>
<div style="left:86px;top:450.32px;line-height:18px;font-size:13.5px;color:#ffffff;font-weight:normal;font-family:'Liberation Sans', sans-serif;white-space:pre;">Adelie</div>
<div style="left:170px;top:450.32px;line-height:18px;font-size:13.5px;color:#ffffff;font-weight:normal;font-family:'Liberation Sans', sans-serif;white-space:pre;">Torgersen</div>
<div style="right:1548px;top:450.32px;line-height:18px;font-size:13.5px;color:#ffffff;font-weight:normal;font-family:'Liberation Sans', sans-serif;white-space:pre;">42.0</div>
<div style="right:1415px;top:450.32px;line-height:18px;font-size:13.5px;color:#ffffff;font-weight:normal;font-family:'Liberation Sans', sans-serif;white-space:pre;">20.2</div>
<div style="right:1255px;top:450.32px;line-height:18px;font-size:13.5px;color:#ffffff;font-weight:normal;font-family:'Liberation Sans', sans-serif;white-space:pre;">190</div>
<div style="right:1131px;top:450.32px;line-height:18px;font-size:13.5px;color:#ffffff;font-weight:normal;font-family:'Liberation Sans', sans-serif;white-space:pre;">4250</div>
<div style="left:801px;top:450.32px;line-height:18px;font-size:13.5px;color:#a3abb3;font-weight:normal;font-family:'Liberation Sans', sans-serif;white-space:pre;font-style:italic">NA</div>
<div style="right:994px;top:450.32px;line-height:18px;font-size:13.5px;color:#ffffff;font-weight:normal;font-family:'Liberation Sans', sans-serif;white-space:pre;">2007</div>
<div style="left:11px;top:472px;width:68px;height:28px;background:#4b5762;"></div>
<div style="left:80px;top:472px;width:852px;height:28px;background:#2d383f;"></div>
<div style="left:79px;top:472px;width:1px;height:28px;background:#0e1c2a;"></div>
<div style="left:163px;top:472px;width:1px;height:28px;background:#0e1c2a;"></div>
<div style="left:240px;top:472px;width:1px;height:28px;background:#0e1c2a;"></div>
<div style="left:377px;top:472px;width:1px;height:28px;background:#0e1c2a;"></div>
<div style="left:510px;top:472px;width:1px;height:28px;background:#0e1c2a;"></div>
<div style="left:670px;top:472px;width:1px;height:28px;background:#0e1c2a;"></div>
<div style="left:794px;top:472px;width:1px;height:28px;background:#0e1c2a;"></div>
<div style="left:862px;top:472px;width:1px;height:28px;background:#0e1c2a;"></div>
<div style="left:931px;top:472px;width:1px;height:28px;background:#0e1c2a;"></div>
<div style="left:11px;top:500px;width:921px;height:1px;background:#0e1c2a;"></div>
<div style="right:1847px;top:479.32px;line-height:18px;font-size:13.5px;color:#ffffff;font-weight:normal;font-family:'Liberation Sans', sans-serif;white-space:pre;">11</div>
<div style="left:86px;top:479.32px;line-height:18px;font-size:13.5px;color:#ffffff;font-weight:normal;font-family:'Liberation Sans', sans-serif;white-space:pre;">Adelie</div>
<div style="left:170px;top:479.32px;line-height:18px;font-size:13.5px;color:#ffffff;font-weight:normal;font-family:'Liberation Sans', sans-serif;white-space:pre;">Torgersen</div>
<div style="right:1548px;top:479.32px;line-height:18px;font-size:13.5px;color:#ffffff;font-weight:normal;font-family:'Liberation Sans', sans-serif;white-space:pre;">37.8</div>
<div style="right:1415px;top:479.32px;line-height:18px;font-size:13.5px;color:#ffffff;font-weight:normal;font-family:'Liberation Sans', sans-serif;white-space:pre;">17.1</div>
<div style="right:1255px;top:479.32px;line-height:18px;font-size:13.5px;color:#ffffff;font-weight:normal;font-family:'Liberation Sans', sans-serif;white-space:pre;">186</div>
<div style="right:1131px;top:479.32px;line-height:18px;font-size:13.5px;color:#ffffff;font-weight:normal;font-family:'Liberation Sans', sans-serif;white-space:pre;">3300</div>
<div style="left:801px;top:479.32px;line-height:18px;font-size:13.5px;color:#a3abb3;font-weight:normal;font-family:'Liberation Sans', sans-serif;white-space:pre;font-style:italic">NA</div>
<div style="right:994px;top:479.32px;line-height:18px;font-size:13.5px;color:#ffffff;font-weight:normal;font-family:'Liberation Sans', sans-serif;white-space:pre;">2007</div>
<div style="left:11px;top:501px;width:68px;height:28px;background:#4b5762;"></div>
<div style="left:80px;top:501px;width:852px;height:28px;background:#273137;"></div>
<div style="left:79px;top:501px;width:1px;height:28px;background:#0e1c2a;"></div>
<div style="left:163px;top:501px;width:1px;height:28px;background:#0e1c2a;"></div>
<div style="left:240px;top:501px;width:1px;height:28px;background:#0e1c2a;"></div>
<div style="left:377px;top:501px;width:1px;height:28px;background:#0e1c2a;"></div>
<div style="left:510px;top:501px;width:1px;height:28px;background:#0e1c2a;"></div>
<div style="left:670px;top:501px;width:1px;height:28px;background:#0e1c2a;"></div>
<div style="left:794px;top:501px;width:1px;height:28px;background:#0e1c2a;"></div>
<div style="left:862px;top:501px;width:1px;height:28px;background:#0e1c2a;"></div>
<div style="left:931px;top:501px;width:1px;height:28px;background:#0e1c2a;"></div>
<div style="left:11px;top:529px;width:921px;height:1px;background:#0e1c2a;"></div>
<div style="right:1847px;top:508.32px;line-height:18px;font-size:13.5px;color:#ffffff;font-weight:normal;font-family:'Liberation Sans', sans-serif;white-space:pre;">12</div>
<div style="left:86px;top:508.32px;line-height:18px;font-size:13.5px;color:#ffffff;font-weight:normal;font-family:'Liberation Sans', sans-serif;white-space:pre;">Adelie</div>
<div style="left:170px;top:508.32px;line-height:18px;font-size:13.5px;color:#ffffff;font-weight:normal;font-family:'Liberation Sans', sans-serif;white-space:pre;">Torgersen</div>
<div style="right:1548px;top:508.32px;line-height:18px;font-size:13.5px;color:#ffffff;font-weight:normal;font-family:'Liberation Sans', sans-serif;white-space:pre;">37.8</div>
<div style="right:1415px;top:508.32px;line-height:18px;font-size:13.5px;color:#ffffff;font-weight:normal;font-family:'Liberation Sans', sans-serif;white-space:pre;">17.3</div>
<div style="right:1255px;top:508.32px;line-height:18px;font-size:13.5px;color:#ffffff;font-weight:normal;font-family:'Liberation Sans', sans-serif;white-space:pre;">180</div>
<div style="right:1131px;top:508.32px;line-height:18px;font-size:13.5px;color:#ffffff;font-weight:normal;font-family:'Liberation Sans', sans-serif;white-space:pre;">3700</div>
<div style="left:801px;top:508.32px;line-height:18px;font-size:13.5px;color:#a3abb3;font-weight:normal;font-family:'Liberation Sans', sans-serif;white-space:pre;font-style:italic">NA</div>
<div style="right:994px;top:508.32px;line-height:18px;font-size:13.5px;color:#ffffff;font-weight:normal;font-family:'Liberation Sans', sans-serif;white-space:pre;">2007</div>
<div style="left:11px;top:530px;width:68px;height:28px;background:#4b5762;"></div>
<div style="left:80px;top:530px;width:852px;height:28px;background:#2d383f;"></div>
<div style="left:79px;top:530px;width:1px;height:28px;background:#0e1c2a;"></div>
<div style="left:163px;top:530px;width:1px;height:28px;background:#0e1c2a;"></div>
<div style="left:240px;top:530px;width:1px;height:28px;background:#0e1c2a;"></div>
<div style="left:377px;top:530px;width:1px;height:28px;background:#0e1c2a;"></div>
<div style="left:510px;top:530px;width:1px;height:28px;background:#0e1c2a;"></div>
<div style="left:670px;top:530px;width:1px;height:28px;background:#0e1c2a;"></div>
<div style="left:794px;top:530px;width:1px;height:28px;background:#0e1c2a;"></div>
<div style="left:862px;top:530px;width:1px;height:28px;background:#0e1c2a;"></div>
<div style="left:931px;top:530px;width:1px;height:28px;background:#0e1c2a;"></div>
<div style="left:11px;top:558px;width:921px;height:1px;background:#0e1c2a;"></div>
<div style="right:1847px;top:537.32px;line-height:18px;font-size:13.5px;color:#ffffff;font-weight:normal;font-family:'Liberation Sans', sans-serif;white-space:pre;">13</div>
<div style="left:86px;top:537.32px;line-height:18px;font-size:13.5px;color:#ffffff;font-weight:normal;font-family:'Liberation Sans', sans-serif;white-space:pre;">Adelie</div>
<div style="left:170px;top:537.32px;line-height:18px;font-size:13.5px;color:#ffffff;font-weight:normal;font-family:'Liberation Sans', sans-serif;white-space:pre;">Torgersen</div>
<div style="right:1548px;top:537.32px;line-height:18px;font-size:13.5px;color:#ffffff;font-weight:normal;font-family:'Liberation Sans', sans-serif;white-space:pre;">41.1</div>
<div style="right:1415px;top:537.32px;line-height:18px;font-size:13.5px;color:#ffffff;font-weight:normal;font-family:'Liberation Sans', sans-serif;white-space:pre;">17.6</div>
<div style="right:1255px;top:537.32px;line-height:18px;font-size:13.5px;color:#ffffff;font-weight:normal;font-family:'Liberation Sans', sans-serif;white-space:pre;">182</div>
<div style="right:1131px;top:537.32px;line-height:18px;font-size:13.5px;color:#ffffff;font-weight:normal;font-family:'Liberation Sans', sans-serif;white-space:pre;">3200</div>
<div style="left:801px;top:537.32px;line-height:18px;font-size:13.5px;color:#ffffff;font-weight:normal;font-family:'Liberation Sans', sans-serif;white-space:pre;">female</div>
<div style="right:994px;top:537.32px;line-height:18px;font-size:13.5px;color:#ffffff;font-weight:normal;font-family:'Liberation Sans', sans-serif;white-space:pre;">2007</div>
<div style="left:11px;top:559px;width:68px;height:28px;background:#4b5762;"></div>
<div style="left:80px;top:559px;width:852px;height:28px;background:#273137;"></div>
<div style="left:79px;top:559px;width:1px;height:28px;background:#0e1c2a;"></div>
<div style="left:163px;top:559px;width:1px;height:28px;background:#0e1c2a;"></div>
<div style="left:240px;top:559px;width:1px;height:28px;background:#0e1c2a;"></div>
<div style="left:377px;top:559px;width:1px;height:28px;background:#0e1c2a;"></div>
<div style="left:510px;top:559px;width:1px;height:28px;background:#0e1c2a;"></div>
<div style="left:670px;top:559px;width:1px;height:28px;background:#0e1c2a;"></div>
<div style="left:794px;top:559px;width:1px;height:28px;background:#0e1c2a;"></div>
<div style="left:862px;top:559px;width:1px;height:28px;background:#0e1c2a;"></div>
<div style="left:931px;top:559px;width:1px;height:28px;background:#0e1c2a;"></div>
<div style="left:11px;top:587px;width:921px;height:1px;background:#0e1c2a;"></div>
<div style="right:1847px;top:566.32px;line-height:18px;font-size:13.5px;color:#ffffff;font-weight:normal;font-family:'Liberation Sans', sans-serif;white-space:pre;">14</div>
<div style="left:86px;top:566.32px;line-height:18px;font-size:13.5px;color:#ffffff;font-weight:normal;font-family:'Liberation Sans', sans-serif;white-space:pre;">Adelie</div>
<div style="left:170px;top:566.32px;line-height:18px;font-size:13.5px;color:#ffffff;font-weight:normal;font-family:'Liberation Sans', sans-serif;white-space:pre;">Torgersen</div>
<div style="right:1548px;top:566.32px;line-height:18px;font-size:13.5px;color:#ffffff;font-weight:normal;font-family:'Liberation Sans', sans-serif;white-space:pre;">38.6</div>
<div style="right:1415px;top:566.32px;line-height:18px;font-size:13.5px;color:#ffffff;font-weight:normal;font-family:'Liberation Sans', sans-serif;white-space:pre;">21.2</div>
<div style="right:1255px;top:566.32px;line-height:18px;font-size:13.5px;color:#ffffff;font-weight:normal;font-family:'Liberation Sans', sans-serif;white-space:pre;">191</div>
<div style="right:1131px;top:566.32px;line-height:18px;font-size:13.5px;color:#ffffff;font-weight:normal;font-family:'Liberation Sans', sans-serif;white-space:pre;">3800</div>
<div style="left:801px;top:566.32px;line-height:18px;font-size:13.5px;color:#ffffff;font-weight:normal;font-family:'Liberation Sans', sans-serif;white-space:pre;">male</div>
<div style="right:994px;top:566.32px;line-height:18px;font-size:13.5px;color:#ffffff;font-weight:normal;font-family:'Liberation Sans', sans-serif;white-space:pre;">2007</div>
<div style="left:11px;top:588px;width:68px;height:28px;background:#4b5762;"></div>
<div style="left:80px;top:588px;width:852px;height:28px;background:#2d383f;"></div>
<div style="left:79px;top:588px;width:1px;height:28px;background:#0e1c2a;"></div>
<div style="left:163px;top:588px;width:1px;height:28px;background:#0e1c2a;"></div>
<div style="left:240px;top:588px;width:1px;height:28px;background:#0e1c2a;"></div>
<div style="left:377px;top:588px;width:1px;height:28px;background:#0e1c2a;"></div>
<div style="left:510px;top:588px;width:1px;height:28px;background:#0e1c2a;"></div>
<div style="left:670px;top:588px;width:1px;height:28px;background:#0e1c2a;"></div>
<div style="left:794px;top:588px;width:1px;height:28px;background:#0e1c2a;"></div>
<div style="left:862px;top:588px;width:1px;height:28px;background:#0e1c2a;"></div>
<div style="left:931px;top:588px;width:1px;height:28px;background:#0e1c2a;"></div>
<div style="left:11px;top:616px;width:921px;height:1px;background:#0e1c2a;"></div>
<div style="right:1847px;top:595.32px;line-height:18px;font-size:13.5px;color:#ffffff;font-weight:normal;font-family:'Liberation Sans', sans-serif;white-space:pre;">15</div>
<div style="left:86px;top:595.32px;line-height:18px;font-size:13.5px;color:#ffffff;font-weight:normal;font-family:'Liberation Sans', sans-serif;white-space:pre;">Adelie</div>
<div style="left:170px;top:595.32px;line-height:18px;font-size:13.5px;color:#ffffff;font-weight:normal;font-family:'Liberation Sans', sans-serif;white-space:pre;">Torgersen</div>
<div style="right:1548px;top:595.32px;line-height:18px;font-size:13.5px;color:#ffffff;font-weight:normal;font-family:'Liberation Sans', sans-serif;white-space:pre;">34.6</div>
<div style="right:1415px;top:595.32px;line-height:18px;font-size:13.5px;color:#ffffff;font-weight:normal;font-family:'Liberation Sans', sans-serif;white-space:pre;">21.1</div>
<div style="right:1255px;top:595.32px;line-height:18px;font-size:13.5px;color:#ffffff;font-weight:normal;font-family:'Liberation Sans', sans-serif;white-space:pre;">198</div>
<div style="right:1131px;top:595.32px;line-height:18px;font-size:13.5px;color:#ffffff;font-weight:normal;font-family:'Liberation Sans', sans-serif;white-space:pre;">4400</div>
<div style="left:801px;top:595.32px;line-height:18px;font-size:13.5px;color:#ffffff;font-weight:normal;font-family:'Liberation Sans', sans-serif;white-space:pre;">male</div>
<div style="right:994px;top:595.32px;line-height:18px;font-size:13.5px;color:#ffffff;font-weight:normal;font-family:'Liberation Sans', sans-serif;white-space:pre;">2007</div>
<div style="left:11px;top:617px;width:68px;height:4px;background:#4b5762;"></div>
<div style="left:80px;top:617px;width:852px;height:4px;background:#273137;"></div>
<div style="left:79px;top:617px;width:1px;height:4px;background:#0e1c2a;"></div>
<div style="left:163px;top:617px;width:1px;height:4px;background:#0e1c2a;"></div>
<div style="left:240px;top:617px;width:1px;height:4px;background:#0e1c2a;"></div>
<div style="left:377px;top:617px;width:1px;height:4px;background:#0e1c2a;"></div>
<div style="left:510px;top:617px;width:1px;height:4px;background:#0e1c2a;"></div>
<div style="left:670px;top:617px;width:1px;height:4px;background:#0e1c2a;"></div>
<div style="left:794px;top:617px;width:1px;height:4px;background:#0e1c2a;"></div>
<div style="left:862px;top:617px;width:1px;height:4px;background:#0e1c2a;"></div>
<div style="left:931px;top:617px;width:1px;height:4px;background:#0e1c2a;"></div>
<div style="left:11px;top:621px;width:921px;height:1px;background:#0e1c2a;"></div>
<div style="left:1014px;top:182px;width:21px;height:439px;background:#2f3840;"></div>
<svg style="left:1016px;top:184px;" width="17" height="17" viewBox="0 0 17 17"><circle cx="8.5" cy="8.5" r="7.8" fill="#4f5b66"/></svg>
<div style="left:11px;top:621px;width:1024px;height:1px;background:#0e1c2a;"></div>
<div style="left:11px;top:622px;width:1024px;height:31px;background:#4e5a65;"></div>
<div style="left:17.5px;top:631.22px;line-height:18px;font-size:13.8px;color:#ffffff;font-weight:normal;font-family:'Liberation Sans', sans-serif;white-space:pre;">Showing 1 to 16 of 344 entries, 8 total columns</div>
<div style="left:10px;top:662px;width:1024px;height:358px;border:1px solid #0f1e2c;border-radius:3px 3px 0 0;background:#2e3841;overflow:hidden"></div>
<div style="left:11px;top:691px;width:1024px;height:1px;background:#0f1e2c;"></div>
<div style="left:11px;top:663px;width:71px;height:29px;background:#4e5a65;border-right:1px solid #0f1e2c;border-radius:3px 3px 0 0"></div>
<div style="left:22px;top:670.32px;line-height:18px;font-size:13.5px;color:#ffffff;font-weight:normal;font-family:'Liberation Sans', sans-serif;white-space:pre;">Console</div>
<div style="left:83px;top:663px;width:89px;height:28px;background:#37414b;border-right:1px solid #0f1e2c;border-radius:3px 3px 0 0"></div>
<div style="left:94.2px;top:670.32px;line-height:18px;font-size:13.5px;color:#ffffff;font-weight:normal;font-family:'Liberation Sans', sans-serif;white-space:pre;">Terminal</div>
<svg style="left:151.5px;top:672.5px;" width="9" height="9" viewBox="0 0 9 9"><path d="M1 1 L8 8 M8 1 L1 8" stroke="#78828b" stroke-width="1.9"/></svg>
<div style="left:173px;top:663px;width:142px;height:28px;background:#37414b;border-right:1px solid #0f1e2c;border-radius:3px 3px 0 0"></div>
<div style="left:185px;top:670.32px;line-height:18px;font-size:13.5px;color:#ffffff;font-weight:normal;font-family:'Liberation Sans', sans-serif;white-space:pre;">Background Jobs</div>
<svg style="left:294px;top:672.5px;" width="9" height="9" viewBox="0 0 9 9"><path d="M1 1 L8 8 M8 1 L1 8" stroke="#78828b" stroke-width="1.9"/></svg>
<svg style="left:984px;top:679px;" width="17" height="9" viewBox="0 0 17 9"><path d="M0.75 8.25 V3 Q0.75 0.75 3 0.75 H14 Q16.25 0.75 16.25 3 V8.25 Z" fill="#2b343d" stroke="#959ea6" stroke-width="1.5"/><rect x="1" y="1" width="15" height="3" rx="1" fill="#8f98a0"/></svg>
<svg style="left:1006px;top:672px;" width="18" height="16" viewBox="0 0 18 16"><path d="M0.75 15.25 V3 Q0.75 0.75 3 0.75 H15 Q17.25 0.75 17.25 3 V15.25 Z" fill="#2b343d" stroke="#959ea6" stroke-width="1.5"/><rect x="1" y="1" width="16" height="3.5" rx="1" fill="#8f98a0"/></svg>
<div style="left:11px;top:692px;width:1024px;height:26px;background:#4e5a65;"></div>
<div style="left:11px;top:718px;width:1024px;height:1px;background:#0f1e2c;"></div>
<svg style="left:21px;top:697px;" width="23" height="19" viewBox="0 0 23 19"><ellipse cx="10.5" cy="7.8" rx="10.3" ry="6.9" fill="#dcdee1"/><ellipse cx="11.8" cy="8.4" rx="6.7" ry="4.5" fill="#4e5a65"/><path fill-rule="evenodd" d="M8.9 4.9 H16.8 Q20.6 4.9 20.6 8.4 Q20.6 11 18.2 11.9 L21.4 17.5 H17.4 L14.7 12.4 H12.5 V17.5 H8.9 Z M12.5 7.6 V9.9 H16 Q17.1 9.9 17.1 8.75 Q17.1 7.6 16 7.6 Z" fill="#1f80e6"/></svg>
<div style="left:57.5px;top:699.82px;line-height:18px;font-size:13.5px;color:#ffffff;font-weight:normal;font-family:'Liberation Sans', sans-serif;white-space:pre;">R 4.4.1</div>
<div style="left:108px;top:699.82px;line-height:18px;font-size:13.5px;color:#9aa3ab;font-weight:normal;font-family:'Liberation Sans', sans-serif;white-space:pre;">·</div>
<div style="left:120px;top:699.82px;line-height:18px;font-size:13.5px;color:#ffffff;font-weight:normal;font-family:'Liberation Sans', sans-serif;white-space:pre;">~/Projets/PRO1036/</div>
<svg style="left:246px;top:703px;" width="15" height="11" viewBox="0 0 15 11"><path d="M1 10 Q2 4 8 3.5 V0.5 L14 5 L8 9.5 V6.5 Q4 6.5 1 10 Z" fill="#c7ccd1"/></svg>
<svg style="left:1004px;top:696px;" width="26" height="19" viewBox="0 0 26 19"><path d="M24 1 L13 11" stroke="#c3c8cd" stroke-width="1.6"/><path d="M13 9 Q16 12 14 14 L8 18 L2 18 Q7 15 8 13 Q9 10 13 9 Z" fill="#c3c8cd"/></svg>
<div style="left:11px;top:719px;width:1024px;height:302px;background:#273238;"></div>
<div style="left:18px;top:719.54px;line-height:20px;font-size:16.73px;color:#ea9257;font-weight:normal;font-family:'Liberation Mono', monospace;white-space:pre;">&gt; 2 + 2</div>
<div style="left:18px;top:739.54px;line-height:20px;font-size:16.73px;color:#d9d9d9;font-weight:normal;font-family:'Liberation Mono', monospace;white-space:pre;">[1] 4</div>
<div style="left:18px;top:759.54px;line-height:20px;font-size:16.73px;color:#ea9257;font-weight:normal;font-family:'Liberation Mono', monospace;white-space:pre;">&gt; x &lt;- 2</div>
<div style="left:18px;top:779.54px;line-height:20px;font-size:16.73px;color:#ea9257;font-weight:normal;font-family:'Liberation Mono', monospace;white-space:pre;">&gt; x * 3</div>
<div style="left:18px;top:799.54px;line-height:20px;font-size:16.73px;color:#d9d9d9;font-weight:normal;font-family:'Liberation Mono', monospace;white-space:pre;">[1] 6</div>
<div style="left:18px;top:819.54px;line-height:20px;font-size:16.73px;color:#ea9257;font-weight:normal;font-family:'Liberation Mono', monospace;white-space:pre;">&gt; library(palmerpenguins)</div>
<div style="left:18px;top:839.54px;line-height:20px;font-size:16.73px;color:#ea9257;font-weight:normal;font-family:'Liberation Mono', monospace;white-space:pre;">&gt; View(penguins)</div>
<div style="left:18px;top:859.54px;line-height:20px;font-size:16.73px;color:#ea9257;font-weight:normal;font-family:'Liberation Mono', monospace;white-space:pre;">&gt; mean(penguins$flipper_length_mm)</div>
<div style="left:18px;top:879.54px;line-height:20px;font-size:16.73px;color:#d9d9d9;font-weight:normal;font-family:'Liberation Mono', monospace;white-space:pre;">[1] NA</div>
<div style="left:18px;top:899.54px;line-height:20px;font-size:16.73px;color:#ea9257;font-weight:normal;font-family:'Liberation Mono', monospace;white-space:pre;">&gt; ?mean</div>
<div style="left:18px;top:919.54px;line-height:20px;font-size:16.73px;color:#ea9257;font-weight:normal;font-family:'Liberation Mono', monospace;white-space:pre;">&gt; mean(penguins$flipper_length_mm, na.rm = TRUE)</div>
<div style="left:18px;top:939.54px;line-height:20px;font-size:16.73px;color:#d9d9d9;font-weight:normal;font-family:'Liberation Mono', monospace;white-space:pre;">[1] 200.9152</div>
<div style="left:18px;top:959.54px;line-height:20px;font-size:16.73px;color:#ea9257;font-weight:normal;font-family:'Liberation Mono', monospace;white-space:pre;">&gt; penguins$flipper_length_mm</div>
<div style="left:18px;top:979.54px;line-height:20px;font-size:16.73px;color:#d9d9d9;font-weight:normal;font-family:'Liberation Mono', monospace;white-space:pre;">  [1] 181 186 195  NA 193 190 181 195 193 190 186 180 182 191 198 185 195 197 184 194 174 180</div>
<div style="left:18px;top:999.54px;line-height:20px;font-size:16.73px;color:#d9d9d9;font-weight:normal;font-family:'Liberation Mono', monospace;white-space:pre;"> [23] 189 185 180 187 183 187 172 180 178 178 188 184 195 196 190 180 181 184 182 195 186 196</div>
<div style="left:1014px;top:719px;width:21px;height:302px;background:#2f3840;"></div>
<div style="left:1017px;top:723px;width:15px;height:142px;background:#4b5762;border-radius:8px"></div>
<div style="left:1045px;top:93px;width:863px;height:337px;border:1px solid #0f1e2c;border-radius:3px 3px 0 0;background:#2e3841;overflow:hidden"></div>
<div style="left:1046px;top:121px;width:863px;height:1px;background:#0f1e2c;"></div>
<div style="left:1046px;top:94px;width:99px;height:28px;background:#4e5a65;border-right:1px solid #0f1e2c;border-radius:3px 3px 0 0"></div>
<div style="left:1057.5px;top:101.32px;line-height:18px;font-size:13.5px;color:#ffffff;font-weight:normal;font-family:'Liberation Sans', sans-serif;white-space:pre;">Environment</div>
<div style="left:1146px;top:94px;width:65px;height:27px;background:#37414b;border-right:1px solid #0f1e2c;border-radius:3px 3px 0 0"></div>
<div style="left:1157.3px;top:101.32px;line-height:18px;font-size:13.5px;color:#ffffff;font-weight:normal;font-family:'Liberation Sans', sans-serif;white-space:pre;">History</div>
<div style="left:1212px;top:94px;width:98px;height:27px;background:#37414b;border-right:1px solid #0f1e2c;border-radius:3px 3px 0 0"></div>
<div style="left:1223px;top:101.32px;line-height:18px;font-size:13.5px;color:#ffffff;font-weight:normal;font-family:'Liberation Sans', sans-serif;white-space:pre;">Connections</div>
<div style="left:1311px;top:94px;width:52px;height:27px;background:#37414b;border-right:1px solid #0f1e2c;border-radius:3px 3px 0 0"></div>
<div style="left:1322.3px;top:101.32px;line-height:18px;font-size:13.5px;color:#ffffff;font-weight:normal;font-family:'Liberation Sans', sans-serif;white-space:pre;">Build</div>
<div style="left:1364px;top:94px;width:40px;height:27px;background:#37414b;border-right:1px solid #0f1e2c;border-radius:3px 3px 0 0"></div>
<div style="left:1375.5px;top:101.32px;line-height:18px;font-size:13.5px;color:#ffffff;font-weight:normal;font-family:'Liberation Sans', sans-serif;white-space:pre;">Git</div>
<div style="left:1405px;top:94px;width:69px;height:27px;background:#37414b;border-right:1px solid #0f1e2c;border-radius:3px 3px 0 0"></div>
<div style="left:1416.3px;top:101.32px;line-height:18px;font-size:13.5px;color:#ffffff;font-weight:normal;font-family:'Liberation Sans', sans-serif;white-space:pre;">Tutorial</div>
<svg style="left:1858px;top:110px;" width="17" height="9" viewBox="0 0 17 9"><path d="M0.75 8.25 V3 Q0.75 0.75 3 0.75 H14 Q16.25 0.75 16.25 3 V8.25 Z" fill="#2b343d" stroke="#959ea6" stroke-width="1.5"/><rect x="1" y="1" width="15" height="3" rx="1" fill="#8f98a0"/></svg>
<svg style="left:1880px;top:103px;" width="18" height="16" viewBox="0 0 18 16"><path d="M0.75 15.25 V3 Q0.75 0.75 3 0.75 H15 Q17.25 0.75 17.25 3 V15.25 Z" fill="#2b343d" stroke="#959ea6" stroke-width="1.5"/><rect x="1" y="1" width="16" height="3.5" rx="1" fill="#8f98a0"/></svg>
<div style="left:1046px;top:122px;width:863px;height:27px;background:#4e5a65;"></div>
<div style="left:1046px;top:149px;width:863px;height:1px;background:#0f1e2c;"></div>
<svg style="left:1053px;top:129px;" width="27" height="18" viewBox="0 0 27 18"><defs><linearGradient id="fg" x1="0" y1="0" x2="0" y2="1"><stop offset="0" stop-color="#f0dc98"/><stop offset="1" stop-color="#c39a3c"/></linearGradient></defs><path d="M4 4 L9 2.5 H17 L19 4 V16 H4 Z" fill="#b8943c"/><path d="M7 3.5 H17 L18.5 5 V13 H7 Z" fill="#e4e6e8"/><path d="M1 9 H16.5 L19 16.8 H3.5 Z" fill="url(#fg)" stroke="#b08a30" stroke-width="0.6"/><path d="M13 12 Q15 6.5 21 6.5" stroke="#1ea67e" stroke-width="2.6" fill="none"/><path d="M20 2.5 L26 6.5 L20 10.5 Z" fill="#1ea67e"/></svg>
<svg style="left:1087px;top:130px;" width="16" height="16" viewBox="0 0 16 16"><rect x="0.5" y="0.2" width="15" height="15.8" rx="1.2" fill="#6d9bd0"/><rect x="2" y="0.8" width="12" height="7" fill="#eceef0"/><rect x="3.5" y="10" width="9" height="6" fill="#f0f0f0"/><rect x="5" y="11" width="2" height="5" fill="#6d9bd0"/></svg>
<div style="left:1113.5px;top:127px;width:2px;height:19px;background:linear-gradient(rgba(14,17,20,0.25),#0e1114 18%,#0e1114 82%,rgba(14,17,20,0.25));border-radius:1px"></div>
<svg style="left:1123px;top:128px;" width="24" height="18" viewBox="0 0 24 18"><rect x="0.5" y="2.5" width="16" height="14" fill="#d9dde1"/><path d="M5.5 3 V16" stroke="#9aa3ab" stroke-width="1"/><path d="M10.5 3 V16" stroke="#9aa3ab" stroke-width="1"/><path d="M1 7.5 H16" stroke="#9aa3ab" stroke-width="1"/><path d="M1 11.5 H16" stroke="#9aa3ab" stroke-width="1"/><path d="M9 10 Q12 4 19 4.5" stroke="#26a37a" stroke-width="2.5" fill="none"/><path d="M17 1 L23 4.5 L17 8 Z" fill="#26a37a"/></svg>
<div style="left:1150px;top:131.32px;line-height:18px;font-size:13.5px;color:#ffffff;font-weight:normal;font-family:'Liberation Sans', sans-serif;white-space:pre;">Import Dataset</div>
<svg style="left:1249px;top:137px;" width="7" height="4" viewBox="0 0 7 4"><path d="M0 0 L7 0 L3.5 4 Z" fill="#d6dade"/></svg>
<div style="left:1265px;top:127px;width:2px;height:19px;background:linear-gradient(rgba(14,17,20,0.25),#0e1114 18%,#0e1114 82%,rgba(14,17,20,0.25));border-radius:1px"></div>
<svg style="left:1273px;top:128px;" width="17" height="17" viewBox="0 0 17 17"><circle cx="8.5" cy="8.5" r="8" fill="#e4523a"/><path d="M8.5 8.5 L4.5 1.57 A8 8 0 0 1 8.5 0.5 Z" fill="#e8e4e0"/><path d="M8.5 8.5 V0.5" stroke="#b8402e" stroke-width="1"/><circle cx="8.5" cy="8.5" r="2" fill="#4e5a65"/></svg>
<div style="left:1296.8px;top:131.32px;line-height:18px;font-size:13.5px;color:#ffffff;font-weight:normal;font-family:'Liberation Sans', sans-serif;white-space:pre;">282 MiB</div>
<svg style="left:1355px;top:137px;" width="7" height="4" viewBox="0 0 7 4"><path d="M0 0 L7 0 L3.5 4 Z" fill="#d6dade"/></svg>
<div style="left:1370px;top:127px;width:2px;height:19px;background:linear-gradient(rgba(14,17,20,0.25),#0e1114 18%,#0e1114 82%,rgba(14,17,20,0.25));border-radius:1px"></div>
<svg style="left:1380px;top:125px;" width="22" height="22" viewBox="0 0 22 22"><ellipse cx="12" cy="20" rx="7" ry="1.5" fill="#3a444e" opacity="0.7"/><path d="M20.5 1.5 L13.5 8.5" stroke="#c25a44" stroke-width="2.2" stroke-linecap="round"/><path d="M13.5 6.8 L16.2 9.8 Q14 15 8.5 20 L5.5 20.5 Q2.5 18 1.5 15.5 Q8 11.5 13.5 6.8 Z" fill="#d0bb7a"/><path d="M8.3 10.8 L13 15.2 M6.2 12.5 L10.9 16.9" stroke="#9c6430" stroke-width="1.1"/></svg>
<svg style="left:1797px;top:131px;" width="15" height="14" viewBox="0 0 15 14"><rect x="0" y="0" width="14" height="1.5" fill="#aab2b9"/><rect x="0" y="4" width="14" height="1.5" fill="#aab2b9"/><rect x="0" y="8" width="14" height="1.5" fill="#aab2b9"/><rect x="0" y="12" width="14" height="1.5" fill="#aab2b9"/></svg>
<div style="left:1819.4px;top:131.32px;line-height:18px;font-size:13.5px;color:#ffffff;font-weight:normal;font-family:'Liberation Sans', sans-serif;white-space:pre;">List</div>
<svg style="left:1848px;top:137px;" width="7" height="4" viewBox="0 0 7 4"><path d="M0 0 L7 0 L3.5 4 Z" fill="#d6dade"/></svg>
<div style="left:1863.5px;top:127px;width:2px;height:19px;background:linear-gradient(rgba(14,17,20,0.25),#0e1114 18%,#0e1114 82%,rgba(14,17,20,0.25));border-radius:1px"></div>
<svg style="left:1873px;top:127px;" width="19" height="19" viewBox="0 0 19 19"><path d="M15 11 A6.5 6.5 0 1 1 12.5 4.5" stroke="#c7ccd1" stroke-width="3.5" fill="none"/><path d="M10 1 L18 2 L16 9 Z" fill="#c7ccd1"/></svg>
<svg style="left:1898px;top:137px;" width="7" height="4" viewBox="0 0 7 4"><path d="M0 0 L7 0 L3.5 4 Z" fill="#d6dade"/></svg>
<div style="left:1046px;top:150px;width:863px;height:29px;background:#4e5a65;"></div>
<div style="left:1046px;top:179px;width:863px;height:1px;background:#0f1e2c;"></div>
<div style="left:1056px;top:156.32px;line-height:18px;font-size:13.5px;color:#ffffff;font-weight:normal;font-family:'Liberation Sans', sans-serif;white-space:pre;">R</div>
<svg style="left:1073px;top:163px;" width="7" height="4" viewBox="0 0 7 4"><path d="M0 0 L7 0 L3.5 4 Z" fill="#d6dade"/></svg>
<div style="left:1089px;top:154px;width:2px;height:20px;background:linear-gradient(rgba(14,17,20,0.25),#0e1114 18%,#0e1114 82%,rgba(14,17,20,0.25));border-radius:1px"></div>
<svg style="left:1099px;top:154px;" width="21" height="20" viewBox="0 0 21 20"><rect x="5" y="0.5" width="10" height="10" rx="2" fill="#b466c8"/><rect x="8" y="7" width="11" height="12" rx="2" fill="#5b8ed6"/><rect x="1" y="4" width="12" height="12" rx="2" fill="#9fbf7a"/></svg>
<div style="left:1126px;top:156.32px;line-height:18px;font-size:13.5px;color:#ffffff;font-weight:normal;font-family:'Liberation Sans', sans-serif;white-space:pre;">Global Environment</div>
<svg style="left:1253.5px;top:163px;" width="7" height="4" viewBox="0 0 7 4"><path d="M0 0 L7 0 L3.5 4 Z" fill="#d6dade"/></svg>
<div style="left:1747px;top:155px;width:150px;height:20px;background:#6b7782;border:1px solid #38434d;border-radius:4px"></div>
<svg style="left:1754.5px;top:156.8px;" width="18" height="18" viewBox="0 0 18 18"><circle cx="7" cy="7" r="4.6" fill="none" stroke="#b9c0c6" stroke-width="2.2"/><path d="M10.2 10.2 L15.6 15.8" stroke="#b9c0c6" stroke-width="3"/></svg>
<div style="left:1046px;top:180px;width:863px;height:25px;background:#4d5a65;"></div>
<div style="left:1052px;top:180.54px;line-height:22px;font-size:16.73px;color:#ffffff;font-weight:normal;font-family:'Liberation Mono', monospace;white-space:pre;">Values</div>
<div style="left:1046px;top:205px;width:863px;height:1px;background:#0f1e2c;"></div>
<div style="left:1046px;top:206px;width:863px;height:22px;background:#262f37;"></div>
<div style="left:1072.5px;top:205.54px;line-height:22px;font-size:16.73px;color:#e4e4e4;font-weight:normal;font-family:'Liberation Mono', monospace;white-space:pre;">x</div>
<div style="left:1286px;top:206px;width:1px;height:22px;background:#0f1e2c;"></div>
<div style="left:1294px;top:205.54px;line-height:22px;font-size:16.73px;color:#e4e4e4;font-weight:normal;font-family:'Liberation Mono', monospace;white-space:pre;">2</div>
<div style="left:1046px;top:228px;width:863px;height:1px;background:#0f1e2c;"></div>
<div style="left:1046px;top:229px;width:863px;height:181px;background:#273238;"></div>
<div style="left:1046px;top:410px;width:863px;height:21px;background:#2f3940;"></div>
<div style="left:1049px;top:413px;width:856px;height:15px;background:#44505b;border-radius:8px"></div>
<div style="left:1045px;top:441px;width:863px;height:579px;border:1px solid #0f1e2c;border-radius:3px 3px 0 0;background:#2e3841;overflow:hidden"></div>
<div style="left:1046px;top:470px;width:863px;height:1px;background:#0f1e2c;"></div>
<div style="left:1046px;top:442px;width:48px;height:28px;background:#37414b;border-right:1px solid #0f1e2c;border-radius:3px 3px 0 0"></div>
<div style="left:1057.5px;top:449.32px;line-height:18px;font-size:13.5px;color:#ffffff;font-weight:normal;font-family:'Liberation Sans', sans-serif;white-space:pre;">Files</div>
<div style="left:1095px;top:442px;width:52px;height:28px;background:#37414b;border-right:1px solid #0f1e2c;border-radius:3px 3px 0 0"></div>
<div style="left:1107.3px;top:449.32px;line-height:18px;font-size:13.5px;color:#ffffff;font-weight:normal;font-family:'Liberation Sans', sans-serif;white-space:pre;">Plots</div>
<div style="left:1148px;top:442px;width:78px;height:28px;background:#37414b;border-right:1px solid #0f1e2c;border-radius:3px 3px 0 0"></div>
<div style="left:1160px;top:449.32px;line-height:18px;font-size:13.5px;color:#ffffff;font-weight:normal;font-family:'Liberation Sans', sans-serif;white-space:pre;">Packages</div>
<div style="left:1227px;top:442px;width:51px;height:29px;background:#4e5a65;border-right:1px solid #0f1e2c;border-radius:3px 3px 0 0"></div>
<div style="left:1238.75px;top:449.32px;line-height:18px;font-size:13.5px;color:#ffffff;font-weight:normal;font-family:'Liberation Sans', sans-serif;white-space:pre;">Help</div>
<div style="left:1279px;top:442px;width:63px;height:28px;background:#37414b;border-right:1px solid #0f1e2c;border-radius:3px 3px 0 0"></div>
<div style="left:1290px;top:449.32px;line-height:18px;font-size:13.5px;color:#ffffff;font-weight:normal;font-family:'Liberation Sans', sans-serif;white-space:pre;">Viewer</div>
<div style="left:1343px;top:442px;width:98px;height:28px;background:#37414b;border-right:1px solid #0f1e2c;border-radius:3px 3px 0 0"></div>
<div style="left:1354.4px;top:449.32px;line-height:18px;font-size:13.5px;color:#ffffff;font-weight:normal;font-family:'Liberation Sans', sans-serif;white-space:pre;">Presentation</div>
<svg style="left:1858px;top:458px;" width="17" height="9" viewBox="0 0 17 9"><path d="M0.75 8.25 V3 Q0.75 0.75 3 0.75 H14 Q16.25 0.75 16.25 3 V8.25 Z" fill="#2b343d" stroke="#959ea6" stroke-width="1.5"/><rect x="1" y="1" width="15" height="3" rx="1" fill="#8f98a0"/></svg>
<svg style="left:1880px;top:451px;" width="18" height="16" viewBox="0 0 18 16"><path d="M0.75 15.25 V3 Q0.75 0.75 3 0.75 H15 Q17.25 0.75 17.25 3 V15.25 Z" fill="#2b343d" stroke="#959ea6" stroke-width="1.5"/><rect x="1" y="1" width="16" height="3.5" rx="1" fill="#8f98a0"/></svg>
<div style="left:1046px;top:471px;width:863px;height:26px;background:#4e5a65;"></div>
<div style="left:1046px;top:497px;width:863px;height:1px;background:#0f1e2c;"></div>
<svg style="left:1056px;top:479px;" width="19" height="15" viewBox="0 0 19 15"><path d="M0.5 7.5 L8 0.5 V4 H18 V11 H8 V14.5 Z" fill="#9ec3df"/></svg>
<svg style="left:1088px;top:479px;" width="19" height="15" viewBox="0 0 19 15"><path d="M18.5 7.5 L11 0.5 V4 H1 V11 H11 V14.5 Z" fill="#9ec3df"/></svg>
<svg style="left:1115px;top:476px;" width="23" height="19" viewBox="0 0 23 19"><path d="M3 9 V18 H19 V9 L11 2 Z" fill="#e3e6e9"/><rect x="9" y="11" width="4" height="7" fill="#9a6a3a"/><path d="M1 10 L11 1.5 L21 10" stroke="#c0271d" stroke-width="2.2" fill="none"/></svg>
<div style="left:1143.5px;top:476px;width:2px;height:19px;background:linear-gradient(rgba(14,17,20,0.25),#0e1114 18%,#0e1114 82%,rgba(14,17,20,0.25));border-radius:1px"></div>
<svg style="left:1153.5px;top:479.5px;" width="20" height="15" viewBox="0 0 20 15"><path d="M6 13 V2.5 Q6 0.5 8 0.5 H16 Q18 0.5 18 2.5 V13 Z" fill="#e3e5e8"/><path d="M6 3.2 V2.5 Q6 0.5 8 0.5 H16 Q18 0.5 18 2.5 V3.2 Z" fill="#c5d8e8"/><rect x="6" y="3" width="12" height="1.2" fill="#b8cde0"/><path d="M4 3.8 H9.8 V9.6 Z" fill="#59636d" stroke="#59636d" stroke-width="1.4"/><path d="M2 11.5 L7 6.5" stroke="#59636d" stroke-width="3.6"/><path d="M2 11.5 L7 6.5" stroke="#d4d8dc" stroke-width="2.2"/><path d="M4.2 4.6 H9 V9.4 Z" fill="#d4d8dc"/></svg>
<div style="left:1713px;top:474px;width:149px;height:20px;background:#6b7782;border:1px solid #38434d;border-radius:4px"></div>
<svg style="left:1723px;top:477.3px;" width="18" height="18" viewBox="0 0 18 18"><circle cx="7" cy="7" r="4.6" fill="none" stroke="#b9c0c6" stroke-width="2.2"/><path d="M10.2 10.2 L15.6 15.8" stroke="#b9c0c6" stroke-width="3"/></svg>
<div style="left:1875px;top:476px;width:2px;height:19px;background:linear-gradient(rgba(14,17,20,0.25),#0e1114 18%,#0e1114 82%,rgba(14,17,20,0.25));border-radius:1px"></div>
<svg style="left:1885px;top:476px;" width="19" height="19" viewBox="0 0 19 19"><path d="M15 11 A6.5 6.5 0 1 1 12.5 4.5" stroke="#c7ccd1" stroke-width="3.5" fill="none"/><path d="M10 1 L18 2 L16 9 Z" fill="#c7ccd1"/></svg>
<div style="left:1046px;top:498px;width:863px;height:29px;background:#4e5a65;"></div>
<div style="left:1046px;top:527px;width:863px;height:1px;background:#0f1e2c;"></div>
<div style="left:1054px;top:502.78px;line-height:21px;font-size:16.5px;color:#ffffff;font-weight:normal;font-family:'Liberation Sans', sans-serif;white-space:pre;">R: Arithmetic Mean</div>
<svg style="left:1200px;top:512px;" width="7" height="4" viewBox="0 0 7 4"><path d="M0 0 L7 0 L3.5 4 Z" fill="#d6dade"/></svg>
<div style="left:1217px;top:502px;width:112px;height:20px;background:#6b7782;border:1px solid #38434d;border-radius:4px"></div>
<div style="left:1230.6px;top:505.82px;line-height:18px;font-size:13.5px;color:#b9c0c6;font-weight:normal;font-family:'Liberation Sans', sans-serif;white-space:pre;">Find in Topic</div>
<div style="left:1046px;top:528px;width:863px;height:493px;background:#263137;"></div>
<div style="left:1888px;top:528px;width:21px;height:493px;background:#2f3941;"></div>
<div style="left:1891px;top:531px;width:15px;height:200px;background:#4b5762;border-radius:8px"></div>
<div style="left:1059px;top:540.22px;line-height:22px;font-size:16.67px;color:#ffffff;font-weight:normal;font-family:'Liberation Sans', sans-serif;white-space:pre;">mean {base}</div>
<div style="right:45px;top:540.22px;line-height:22px;font-size:16.67px;color:#ffffff;font-weight:normal;font-family:'Liberation Sans', sans-serif;white-space:pre;">R Documentation</div>
<div style="left:1056px;top:586.11px;line-height:39px;font-size:30px;color:#ffffff;font-weight:normal;font-family:'Liberation Sans', sans-serif;white-space:pre;">Arithmetic Mean</div>
<div style="left:1056px;top:647.07px;line-height:26px;font-size:20px;color:#ffffff;font-weight:bold;font-family:'Liberation Sans', sans-serif;white-space:pre;">Description</div>
<div style="left:1056px;top:690.22px;line-height:22px;font-size:16.67px;color:#ffffff;font-weight:normal;font-family:'Liberation Sans', sans-serif;white-space:pre;">Generic function for the (trimmed) arithmetic mean.</div>
<div style="left:1056px;top:728.07px;line-height:26px;font-size:20px;color:#ffffff;font-weight:bold;font-family:'Liberation Sans', sans-serif;white-space:pre;">Usage</div>
<div style="left:1056px;top:773px;width:822px;height:109px;background:#1f1f1f;border-radius:5px"></div>
<div style="left:1066px;top:778.54px;line-height:22px;font-size:16.73px;color:#d6d6d6;font-weight:normal;font-family:'Liberation Mono', monospace;white-space:pre;">mean(x, ...)</div>
<div style="left:1066px;top:828.54px;line-height:22px;font-size:16.73px;color:#8e9296;font-weight:normal;font-family:'Liberation Mono', monospace;white-space:pre;">## Default S3 method:</div>
<div style="left:1066px;top:853.54px;line-height:22px;font-size:16.73px;color:#d6d6d6;font-weight:normal;font-family:'Liberation Mono', monospace;white-space:pre;"><span style="color:#d6d6d6">mean(x, trim </span><span style="color:#c9923f">=</span> <span style="color:#8e1a60">0</span><span style="color:#d6d6d6">, na.rm </span><span style="color:#c9923f">=</span> <span style="color:#a8186e">FALSE</span><span style="color:#d6d6d6">, ...)</span></div>
<div style="left:1056px;top:899.07px;line-height:26px;font-size:20px;color:#ffffff;font-weight:bold;font-family:'Liberation Sans', sans-serif;white-space:pre;">Arguments</div>
<div style="left:1060px;top:947.54px;line-height:22px;font-size:16.73px;color:#ffffff;font-weight:normal;font-family:'Liberation Mono', monospace;white-space:pre;">x</div>
<div style="left:1127.7px;top:946.22px;line-height:22px;font-size:16.67px;color:#ffffff;font-weight:normal;font-family:'Liberation Sans', sans-serif;white-space:pre;">an <b>R</b> object. Currently there are methods for numeric/logical vectors and <u>date</u>, <u>date-time</u> and <u>time</u></div>
<div style="left:1127.7px;top:965.72px;line-height:22px;font-size:16.67px;color:#ffffff;font-weight:normal;font-family:'Liberation Sans', sans-serif;white-space:pre;"><u>interval</u> objects. Complex vectors are allowed for <span style="font-family:'Liberation Mono'">trim = 0</span>, only.</div>
<div style="left:1060px;top:999.04px;line-height:22px;font-size:16.73px;color:#ffffff;font-weight:normal;font-family:'Liberation Mono', monospace;white-space:pre;">trim</div>
<div style="left:1127.7px;top:997.72px;line-height:22px;font-size:16.67px;color:#ffffff;font-weight:normal;font-family:'Liberation Sans', sans-serif;white-space:pre;">the fraction (0 to 0.5) of observations to be trimmed from each end of <span style="font-family:'Liberation Mono'">x</span> before the mean is computed.</div>
</div></body></html>
